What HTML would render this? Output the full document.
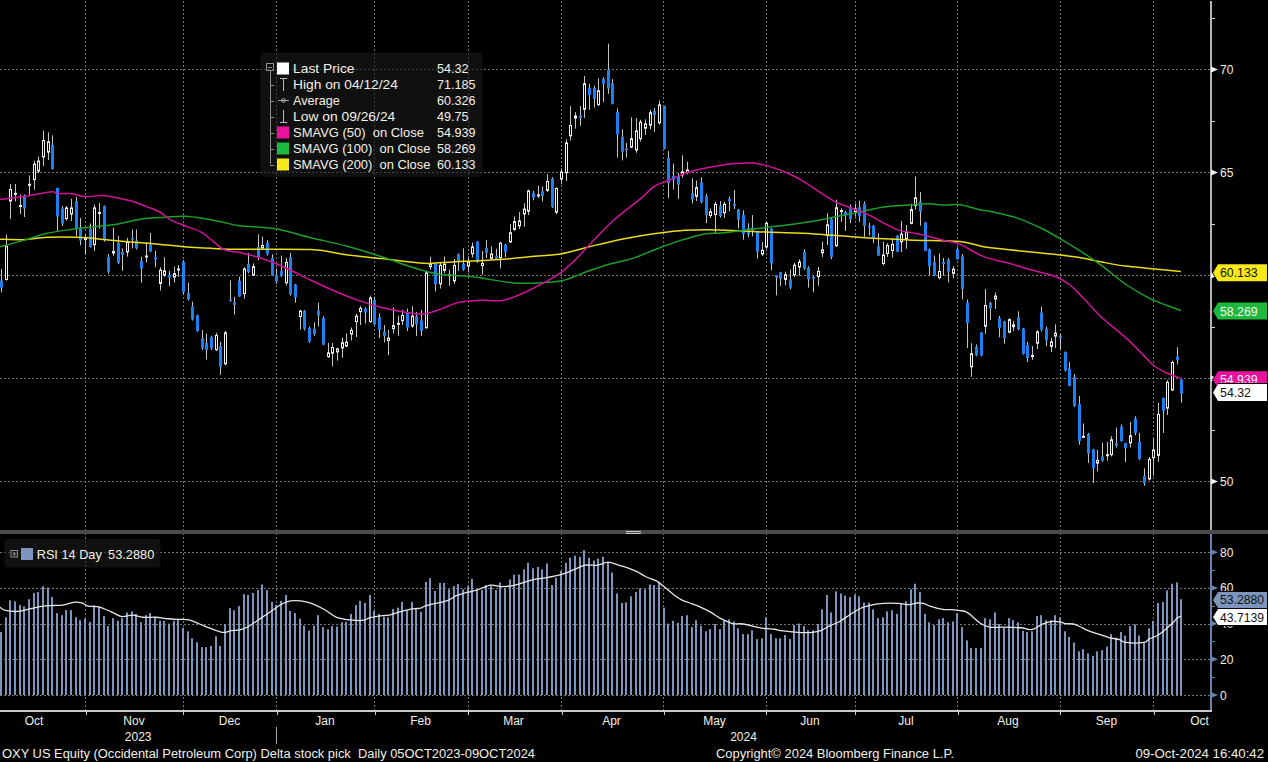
<!DOCTYPE html>
<html><head><meta charset="utf-8"><style>
html,body{margin:0;padding:0;background:#000;}
body{width:1268px;height:762px;overflow:hidden;}
svg{display:block;font-family:"Liberation Sans",sans-serif;}
</style></head><body>
<svg width="1268" height="762" viewBox="0 0 1268 762">
<rect width="1268" height="762" fill="#000"/>
<line x1="85.5" y1="1" x2="85.5" y2="711" stroke="#747474" stroke-width="1" stroke-dasharray="2 2"/>
<line x1="183.5" y1="1" x2="183.5" y2="711" stroke="#747474" stroke-width="1" stroke-dasharray="2 2"/>
<line x1="276.5" y1="1" x2="276.5" y2="711" stroke="#747474" stroke-width="1" stroke-dasharray="2 2"/>
<line x1="374.5" y1="1" x2="374.5" y2="711" stroke="#747474" stroke-width="1" stroke-dasharray="2 2"/>
<line x1="468.5" y1="1" x2="468.5" y2="711" stroke="#747474" stroke-width="1" stroke-dasharray="2 2"/>
<line x1="561.5" y1="1" x2="561.5" y2="711" stroke="#747474" stroke-width="1" stroke-dasharray="2 2"/>
<line x1="663.5" y1="1" x2="663.5" y2="711" stroke="#747474" stroke-width="1" stroke-dasharray="2 2"/>
<line x1="766.5" y1="1" x2="766.5" y2="711" stroke="#747474" stroke-width="1" stroke-dasharray="2 2"/>
<line x1="855.5" y1="1" x2="855.5" y2="711" stroke="#747474" stroke-width="1" stroke-dasharray="2 2"/>
<line x1="957.5" y1="1" x2="957.5" y2="711" stroke="#747474" stroke-width="1" stroke-dasharray="2 2"/>
<line x1="1060.5" y1="1" x2="1060.5" y2="711" stroke="#747474" stroke-width="1" stroke-dasharray="2 2"/>
<line x1="1153.5" y1="1" x2="1153.5" y2="711" stroke="#747474" stroke-width="1" stroke-dasharray="2 2"/>
<line x1="0" y1="69.5" x2="1211" y2="69.5" stroke="#747474" stroke-width="1" stroke-dasharray="2 2"/>
<line x1="0" y1="172.5" x2="1211" y2="172.5" stroke="#747474" stroke-width="1" stroke-dasharray="2 2"/>
<line x1="0" y1="275.5" x2="1211" y2="275.5" stroke="#747474" stroke-width="1" stroke-dasharray="2 2"/>
<line x1="0" y1="378.5" x2="1211" y2="378.5" stroke="#747474" stroke-width="1" stroke-dasharray="2 2"/>
<line x1="0" y1="481.5" x2="1211" y2="481.5" stroke="#747474" stroke-width="1" stroke-dasharray="2 2"/>
<line x1="0" y1="552.5" x2="1211" y2="552.5" stroke="#747474" stroke-width="1" stroke-dasharray="2 2"/>
<line x1="0" y1="588.5" x2="1211" y2="588.5" stroke="#747474" stroke-width="1" stroke-dasharray="2 2"/>
<line x1="0" y1="624.5" x2="1211" y2="624.5" stroke="#747474" stroke-width="1" stroke-dasharray="2 2"/>
<line x1="0" y1="659.5" x2="1211" y2="659.5" stroke="#747474" stroke-width="1" stroke-dasharray="2 2"/>
<line x1="0" y1="695.5" x2="1211" y2="695.5" stroke="#747474" stroke-width="1" stroke-dasharray="2 2"/>
<rect x="260.5" y="52.5" width="222" height="124.5" rx="4" fill="#1a1a1a" fill-opacity="0.6"/>
<rect x="1" y="269" width="1" height="23.5" fill="#c4c4c4"/>
<rect x="0" y="280.6" width="3" height="7.1" fill="#1d80f2"/>
<rect x="6" y="234.6" width="1" height="46" fill="#c4c4c4"/>
<rect x="5.5" y="246.5" width="2" height="33" fill="#000" stroke="#f0f0f0" stroke-width="1"/>
<rect x="10" y="183.8" width="1" height="35.2" fill="#c4c4c4"/>
<rect x="9.5" y="189.5" width="2" height="11.5" fill="#000" stroke="#f0f0f0" stroke-width="1"/>
<rect x="15" y="184" width="1" height="17.5" fill="#c4c4c4"/>
<rect x="14.5" y="193.3" width="2" height="1" fill="#000" stroke="#f0f0f0" stroke-width="1"/>
<rect x="20" y="194.4" width="1" height="19.6" fill="#c4c4c4"/>
<rect x="19.5" y="205.5" width="2" height="1" fill="#000" stroke="#f0f0f0" stroke-width="1"/>
<rect x="24" y="194.4" width="1" height="22.6" fill="#c4c4c4"/>
<rect x="23" y="195.6" width="3" height="13" fill="#1d80f2"/>
<rect x="29" y="175.5" width="1" height="20.1" fill="#c4c4c4"/>
<rect x="28.5" y="184.3" width="2" height="1" fill="#000" stroke="#f0f0f0" stroke-width="1"/>
<rect x="34" y="160.6" width="1" height="29.1" fill="#c4c4c4"/>
<rect x="33.5" y="164.2" width="2" height="15.3" fill="#000" stroke="#f0f0f0" stroke-width="1"/>
<rect x="38" y="156.6" width="1" height="16.4" fill="#c4c4c4"/>
<rect x="37.5" y="161.1" width="2" height="9.9" fill="#000" stroke="#f0f0f0" stroke-width="1"/>
<rect x="43" y="130.6" width="1" height="35.4" fill="#c4c4c4"/>
<rect x="42.5" y="140.5" width="2" height="16.3" fill="#000" stroke="#f0f0f0" stroke-width="1"/>
<rect x="48" y="132.3" width="1" height="27.7" fill="#c4c4c4"/>
<rect x="47.5" y="141.8" width="2" height="10.3" fill="#000" stroke="#f0f0f0" stroke-width="1"/>
<rect x="52" y="135.4" width="1" height="34.2" fill="#c4c4c4"/>
<rect x="51" y="144.8" width="3" height="24.2" fill="#1d80f2"/>
<rect x="57" y="187.8" width="1" height="43.2" fill="#c4c4c4"/>
<rect x="56" y="187.8" width="3" height="28.6" fill="#1d80f2"/>
<rect x="62" y="206" width="1" height="20" fill="#c4c4c4"/>
<rect x="61" y="208.6" width="3" height="14.9" fill="#1d80f2"/>
<rect x="66" y="206" width="1" height="14.4" fill="#c4c4c4"/>
<rect x="65.5" y="207.9" width="2" height="10.8" fill="#000" stroke="#f0f0f0" stroke-width="1"/>
<rect x="71" y="198.7" width="1" height="22.3" fill="#c4c4c4"/>
<rect x="70.5" y="207.9" width="2" height="6.1" fill="#000" stroke="#f0f0f0" stroke-width="1"/>
<rect x="76" y="196.8" width="1" height="39" fill="#c4c4c4"/>
<rect x="75" y="201.5" width="3" height="27.2" fill="#1d80f2"/>
<rect x="80" y="218" width="1" height="27.2" fill="#c4c4c4"/>
<rect x="79" y="228.7" width="3" height="11.8" fill="#1d80f2"/>
<rect x="85" y="234.6" width="1" height="20.1" fill="#c4c4c4"/>
<rect x="84.5" y="238.1" width="2" height="1.4" fill="#000" stroke="#f0f0f0" stroke-width="1"/>
<rect x="90" y="223.5" width="1" height="24.1" fill="#c4c4c4"/>
<rect x="89" y="229" width="3" height="18" fill="#1d80f2"/>
<rect x="94" y="204.6" width="1" height="46.4" fill="#c4c4c4"/>
<rect x="93.5" y="207.9" width="2" height="36.8" fill="#000" stroke="#f0f0f0" stroke-width="1"/>
<rect x="99" y="203" width="1" height="25.7" fill="#c4c4c4"/>
<rect x="98.5" y="212.5" width="2" height="1" fill="#000" stroke="#f0f0f0" stroke-width="1"/>
<rect x="104" y="205.5" width="1" height="36.2" fill="#c4c4c4"/>
<rect x="103" y="206" width="3" height="33" fill="#1d80f2"/>
<rect x="108" y="254" width="1" height="19.6" fill="#c4c4c4"/>
<rect x="107" y="257" width="3" height="14.7" fill="#1d80f2"/>
<rect x="113" y="227.5" width="1" height="28.3" fill="#c4c4c4"/>
<rect x="112.5" y="251.5" width="2" height="1.5" fill="#000" stroke="#f0f0f0" stroke-width="1"/>
<rect x="118" y="235.8" width="1" height="28.2" fill="#c4c4c4"/>
<rect x="117" y="242.8" width="3" height="20.2" fill="#1d80f2"/>
<rect x="122" y="248.4" width="1" height="22.5" fill="#c4c4c4"/>
<rect x="121" y="252" width="3" height="2.8" fill="#1d80f2"/>
<rect x="127" y="237.8" width="1" height="18.9" fill="#c4c4c4"/>
<rect x="126.5" y="241.8" width="2" height="10.1" fill="#000" stroke="#f0f0f0" stroke-width="1"/>
<rect x="132" y="229.5" width="1" height="18.9" fill="#c4c4c4"/>
<rect x="131" y="237.8" width="3" height="1.9" fill="#1d80f2"/>
<rect x="136" y="229.5" width="1" height="20.1" fill="#c4c4c4"/>
<rect x="135" y="240.6" width="3" height="7.8" fill="#1d80f2"/>
<rect x="141" y="256.7" width="1" height="26" fill="#c4c4c4"/>
<rect x="140" y="261" width="3" height="7.5" fill="#1d80f2"/>
<rect x="146" y="242.5" width="1" height="20.1" fill="#c4c4c4"/>
<rect x="145.5" y="256" width="2" height="1" fill="#000" stroke="#f0f0f0" stroke-width="1"/>
<rect x="150" y="233" width="1" height="19" fill="#c4c4c4"/>
<rect x="149" y="244.9" width="3" height="6.6" fill="#1d80f2"/>
<rect x="155" y="250.8" width="1" height="16.5" fill="#c4c4c4"/>
<rect x="154" y="257.2" width="3" height="2.3" fill="#1d80f2"/>
<rect x="160" y="267.3" width="1" height="23.2" fill="#c4c4c4"/>
<rect x="159.5" y="270.2" width="2" height="13.2" fill="#000" stroke="#f0f0f0" stroke-width="1"/>
<rect x="164" y="257.2" width="1" height="19.6" fill="#c4c4c4"/>
<rect x="163.5" y="270.9" width="2" height="4.2" fill="#000" stroke="#f0f0f0" stroke-width="1"/>
<rect x="169" y="270.9" width="1" height="15.3" fill="#c4c4c4"/>
<rect x="168" y="275" width="3" height="2.5" fill="#1d80f2"/>
<rect x="174" y="266.6" width="1" height="16.1" fill="#c4c4c4"/>
<rect x="173.5" y="273.7" width="2" height="3.3" fill="#000" stroke="#f0f0f0" stroke-width="1"/>
<rect x="178" y="265" width="1" height="11.8" fill="#c4c4c4"/>
<rect x="177.5" y="269" width="2" height="1" fill="#000" stroke="#f0f0f0" stroke-width="1"/>
<rect x="183" y="260.2" width="1" height="34.3" fill="#c4c4c4"/>
<rect x="182" y="261.9" width="3" height="30.2" fill="#1d80f2"/>
<rect x="188" y="282.7" width="1" height="17.7" fill="#c4c4c4"/>
<rect x="187" y="292.8" width="3" height="6.4" fill="#1d80f2"/>
<rect x="192" y="301.6" width="1" height="18.9" fill="#c4c4c4"/>
<rect x="191" y="306.3" width="3" height="13" fill="#1d80f2"/>
<rect x="197" y="314.6" width="1" height="17.2" fill="#c4c4c4"/>
<rect x="196" y="315.3" width="3" height="15.8" fill="#1d80f2"/>
<rect x="202" y="330" width="1" height="20" fill="#c4c4c4"/>
<rect x="201" y="338.2" width="3" height="10.2" fill="#1d80f2"/>
<rect x="206" y="333.5" width="1" height="26" fill="#c4c4c4"/>
<rect x="205" y="343" width="3" height="7" fill="#1d80f2"/>
<rect x="211" y="335.8" width="1" height="14.2" fill="#c4c4c4"/>
<rect x="210" y="337" width="3" height="11.4" fill="#1d80f2"/>
<rect x="216" y="332.8" width="1" height="18.4" fill="#c4c4c4"/>
<rect x="215.5" y="335.5" width="2" height="14" fill="#000" stroke="#f0f0f0" stroke-width="1"/>
<rect x="220" y="341.7" width="1" height="33.1" fill="#c4c4c4"/>
<rect x="219" y="346" width="3" height="20.5" fill="#1d80f2"/>
<rect x="225" y="331" width="1" height="34.4" fill="#c4c4c4"/>
<rect x="224.5" y="332.8" width="2" height="30.9" fill="#000" stroke="#f0f0f0" stroke-width="1"/>
<rect x="230" y="280.3" width="1" height="21.3" fill="#c4c4c4"/>
<rect x="229" y="299.7" width="3" height="1.5" fill="#1d80f2"/>
<rect x="234" y="296.9" width="1" height="17.7" fill="#c4c4c4"/>
<rect x="233" y="302.3" width="3" height="2.7" fill="#1d80f2"/>
<rect x="239" y="276.8" width="1" height="20.1" fill="#c4c4c4"/>
<rect x="238" y="280.8" width="3" height="15.6" fill="#1d80f2"/>
<rect x="244" y="267.3" width="1" height="31.4" fill="#c4c4c4"/>
<rect x="243.5" y="269" width="2" height="24.5" fill="#000" stroke="#f0f0f0" stroke-width="1"/>
<rect x="248" y="253" width="1" height="20.2" fill="#c4c4c4"/>
<rect x="247" y="263.8" width="3" height="8.2" fill="#1d80f2"/>
<rect x="253" y="263.3" width="1" height="12.7" fill="#c4c4c4"/>
<rect x="252.5" y="266.6" width="2" height="8.5" fill="#000" stroke="#f0f0f0" stroke-width="1"/>
<rect x="258" y="234.3" width="1" height="25.9" fill="#c4c4c4"/>
<rect x="257" y="247.2" width="3" height="10.7" fill="#1d80f2"/>
<rect x="262" y="236.6" width="1" height="13" fill="#c4c4c4"/>
<rect x="261.5" y="245.4" width="2" height="2.5" fill="#000" stroke="#f0f0f0" stroke-width="1"/>
<rect x="267" y="240.2" width="1" height="15.3" fill="#c4c4c4"/>
<rect x="266" y="243" width="3" height="10.9" fill="#1d80f2"/>
<rect x="272" y="254.3" width="1" height="21.7" fill="#c4c4c4"/>
<rect x="271" y="257.9" width="3" height="17.7" fill="#1d80f2"/>
<rect x="276" y="268.5" width="1" height="15.4" fill="#c4c4c4"/>
<rect x="275" y="275.1" width="3" height="6.4" fill="#1d80f2"/>
<rect x="281" y="255.5" width="1" height="21.3" fill="#c4c4c4"/>
<rect x="280" y="270.9" width="3" height="4.2" fill="#1d80f2"/>
<rect x="286" y="257.9" width="1" height="27.6" fill="#c4c4c4"/>
<rect x="285.5" y="262.4" width="2" height="20.3" fill="#000" stroke="#f0f0f0" stroke-width="1"/>
<rect x="290" y="253" width="1" height="42.7" fill="#c4c4c4"/>
<rect x="289" y="257.2" width="3" height="36.8" fill="#1d80f2"/>
<rect x="295" y="283.9" width="1" height="18.9" fill="#c4c4c4"/>
<rect x="294" y="284.6" width="3" height="12.7" fill="#1d80f2"/>
<rect x="300" y="309.9" width="1" height="19.6" fill="#c4c4c4"/>
<rect x="299.5" y="311.1" width="2" height="5.4" fill="#000" stroke="#f0f0f0" stroke-width="1"/>
<rect x="304" y="309.9" width="1" height="20.5" fill="#c4c4c4"/>
<rect x="303" y="310.6" width="3" height="18.1" fill="#1d80f2"/>
<rect x="309" y="326.4" width="1" height="16.6" fill="#c4c4c4"/>
<rect x="308" y="328" width="3" height="13.3" fill="#1d80f2"/>
<rect x="314" y="322.4" width="1" height="13.4" fill="#c4c4c4"/>
<rect x="313" y="328.7" width="3" height="5.5" fill="#1d80f2"/>
<rect x="318" y="302.8" width="1" height="23.6" fill="#c4c4c4"/>
<rect x="317" y="310.6" width="3" height="4.7" fill="#1d80f2"/>
<rect x="323" y="316.2" width="1" height="29.1" fill="#c4c4c4"/>
<rect x="322" y="318.1" width="3" height="26.5" fill="#1d80f2"/>
<rect x="328" y="343" width="1" height="14.8" fill="#c4c4c4"/>
<rect x="327.5" y="352.9" width="2" height="3.7" fill="#000" stroke="#f0f0f0" stroke-width="1"/>
<rect x="332" y="343" width="1" height="23.5" fill="#c4c4c4"/>
<rect x="331.5" y="347.5" width="2" height="5.6" fill="#000" stroke="#f0f0f0" stroke-width="1"/>
<rect x="337" y="347.7" width="1" height="12.9" fill="#c4c4c4"/>
<rect x="336.5" y="348.9" width="2" height="3" fill="#000" stroke="#f0f0f0" stroke-width="1"/>
<rect x="342" y="337.5" width="1" height="20.3" fill="#c4c4c4"/>
<rect x="341.5" y="342.7" width="2" height="5.2" fill="#000" stroke="#f0f0f0" stroke-width="1"/>
<rect x="346" y="333.5" width="1" height="13.5" fill="#c4c4c4"/>
<rect x="345.5" y="342.2" width="2" height="3.8" fill="#000" stroke="#f0f0f0" stroke-width="1"/>
<rect x="351" y="327.5" width="1" height="13" fill="#c4c4c4"/>
<rect x="350.5" y="330.4" width="2" height="3.7" fill="#000" stroke="#f0f0f0" stroke-width="1"/>
<rect x="356" y="314" width="1" height="23" fill="#c4c4c4"/>
<rect x="355.5" y="316.2" width="2" height="5.3" fill="#000" stroke="#f0f0f0" stroke-width="1"/>
<rect x="360" y="306.2" width="1" height="18.8" fill="#c4c4c4"/>
<rect x="359.5" y="308.4" width="2" height="3.2" fill="#000" stroke="#f0f0f0" stroke-width="1"/>
<rect x="365" y="307.4" width="1" height="16.1" fill="#c4c4c4"/>
<rect x="364" y="308.6" width="3" height="4" fill="#1d80f2"/>
<rect x="370" y="295.6" width="1" height="27.2" fill="#c4c4c4"/>
<rect x="369.5" y="298" width="2" height="23.5" fill="#000" stroke="#f0f0f0" stroke-width="1"/>
<rect x="374" y="296.8" width="1" height="28.3" fill="#c4c4c4"/>
<rect x="373" y="299.8" width="3" height="24.6" fill="#1d80f2"/>
<rect x="379" y="313.3" width="1" height="24.8" fill="#c4c4c4"/>
<rect x="378" y="317.3" width="3" height="12.6" fill="#1d80f2"/>
<rect x="384" y="325.1" width="1" height="17.3" fill="#c4c4c4"/>
<rect x="383" y="331.5" width="3" height="4.7" fill="#1d80f2"/>
<rect x="388" y="329.9" width="1" height="25.2" fill="#c4c4c4"/>
<rect x="387.5" y="338.1" width="2" height="2.4" fill="#000" stroke="#f0f0f0" stroke-width="1"/>
<rect x="393" y="307.4" width="1" height="26" fill="#c4c4c4"/>
<rect x="392.5" y="325.6" width="2" height="3" fill="#000" stroke="#f0f0f0" stroke-width="1"/>
<rect x="398" y="315.7" width="1" height="20.1" fill="#c4c4c4"/>
<rect x="397.5" y="323.3" width="2" height="1" fill="#000" stroke="#f0f0f0" stroke-width="1"/>
<rect x="402" y="309.8" width="1" height="15.3" fill="#c4c4c4"/>
<rect x="401.5" y="315.5" width="2" height="5.1" fill="#000" stroke="#f0f0f0" stroke-width="1"/>
<rect x="407" y="308.6" width="1" height="22.4" fill="#c4c4c4"/>
<rect x="406" y="312.1" width="3" height="15.4" fill="#1d80f2"/>
<rect x="412" y="306.2" width="1" height="21.3" fill="#c4c4c4"/>
<rect x="411.5" y="316.2" width="2" height="9.6" fill="#000" stroke="#f0f0f0" stroke-width="1"/>
<rect x="416" y="312.1" width="1" height="24.1" fill="#c4c4c4"/>
<rect x="415" y="316.4" width="3" height="8" fill="#1d80f2"/>
<rect x="421" y="309.8" width="1" height="26" fill="#c4c4c4"/>
<rect x="420" y="320.4" width="3" height="10.6" fill="#1d80f2"/>
<rect x="426" y="270.8" width="1" height="57.9" fill="#c4c4c4"/>
<rect x="425.5" y="272.9" width="2" height="54.8" fill="#000" stroke="#f0f0f0" stroke-width="1"/>
<rect x="430" y="256.6" width="1" height="13" fill="#c4c4c4"/>
<rect x="429.5" y="264.2" width="2" height="2.5" fill="#000" stroke="#f0f0f0" stroke-width="1"/>
<rect x="435" y="263" width="1" height="28.3" fill="#c4c4c4"/>
<rect x="434" y="263.7" width="3" height="20.6" fill="#1d80f2"/>
<rect x="440" y="262.5" width="1" height="26" fill="#c4c4c4"/>
<rect x="439.5" y="265.4" width="2" height="18.4" fill="#000" stroke="#f0f0f0" stroke-width="1"/>
<rect x="444" y="256.6" width="1" height="16.6" fill="#c4c4c4"/>
<rect x="443.5" y="264.2" width="2" height="6.1" fill="#000" stroke="#f0f0f0" stroke-width="1"/>
<rect x="449" y="269.6" width="1" height="16.1" fill="#c4c4c4"/>
<rect x="448.5" y="274.8" width="2" height="1" fill="#000" stroke="#f0f0f0" stroke-width="1"/>
<rect x="454" y="259" width="1" height="24.8" fill="#c4c4c4"/>
<rect x="453.5" y="265.4" width="2" height="15.5" fill="#000" stroke="#f0f0f0" stroke-width="1"/>
<rect x="458" y="253.5" width="1" height="17.3" fill="#c4c4c4"/>
<rect x="457" y="254.3" width="3" height="7.7" fill="#1d80f2"/>
<rect x="463" y="248.3" width="1" height="22.5" fill="#c4c4c4"/>
<rect x="462" y="263.7" width="3" height="5.9" fill="#1d80f2"/>
<rect x="468" y="256.5" width="1" height="15.9" fill="#c4c4c4"/>
<rect x="467.5" y="262.2" width="2" height="3.8" fill="#000" stroke="#f0f0f0" stroke-width="1"/>
<rect x="472" y="242.4" width="1" height="15.1" fill="#c4c4c4"/>
<rect x="471.5" y="246.9" width="2" height="6.8" fill="#000" stroke="#f0f0f0" stroke-width="1"/>
<rect x="477" y="241" width="1" height="21.9" fill="#c4c4c4"/>
<rect x="476" y="241.7" width="3" height="19.6" fill="#1d80f2"/>
<rect x="482" y="251.1" width="1" height="23.6" fill="#c4c4c4"/>
<rect x="481.5" y="263.4" width="2" height="2.1" fill="#000" stroke="#f0f0f0" stroke-width="1"/>
<rect x="486" y="240" width="1" height="18.2" fill="#c4c4c4"/>
<rect x="485" y="248" width="3" height="4.8" fill="#1d80f2"/>
<rect x="491" y="246.4" width="1" height="13" fill="#c4c4c4"/>
<rect x="490.5" y="254" width="2" height="4.4" fill="#000" stroke="#f0f0f0" stroke-width="1"/>
<rect x="496" y="248.8" width="1" height="11.1" fill="#c4c4c4"/>
<rect x="495" y="255.8" width="3" height="3.1" fill="#1d80f2"/>
<rect x="500" y="241.7" width="1" height="26.7" fill="#c4c4c4"/>
<rect x="499.5" y="243.3" width="2" height="14.4" fill="#000" stroke="#f0f0f0" stroke-width="1"/>
<rect x="505" y="244" width="1" height="13" fill="#c4c4c4"/>
<rect x="504" y="244.7" width="3" height="7.1" fill="#1d80f2"/>
<rect x="510" y="224" width="1" height="18.8" fill="#c4c4c4"/>
<rect x="509.5" y="232.7" width="2" height="9.2" fill="#000" stroke="#f0f0f0" stroke-width="1"/>
<rect x="514" y="216.4" width="1" height="14.6" fill="#c4c4c4"/>
<rect x="513.5" y="221.6" width="2" height="7.8" fill="#000" stroke="#f0f0f0" stroke-width="1"/>
<rect x="519" y="212.1" width="1" height="17" fill="#c4c4c4"/>
<rect x="518.5" y="220.9" width="2" height="4.9" fill="#000" stroke="#f0f0f0" stroke-width="1"/>
<rect x="524" y="203.2" width="1" height="23.6" fill="#c4c4c4"/>
<rect x="523.5" y="209.1" width="2" height="4.9" fill="#000" stroke="#f0f0f0" stroke-width="1"/>
<rect x="528" y="189.7" width="1" height="25.3" fill="#c4c4c4"/>
<rect x="527.5" y="190.9" width="2" height="20.3" fill="#000" stroke="#f0f0f0" stroke-width="1"/>
<rect x="533" y="190.9" width="1" height="9.4" fill="#c4c4c4"/>
<rect x="532" y="193.2" width="3" height="4.3" fill="#1d80f2"/>
<rect x="538" y="185.7" width="1" height="12.3" fill="#c4c4c4"/>
<rect x="537.5" y="194.9" width="2" height="1" fill="#000" stroke="#f0f0f0" stroke-width="1"/>
<rect x="542" y="186.6" width="1" height="14.9" fill="#c4c4c4"/>
<rect x="541" y="191.3" width="3" height="4.7" fill="#1d80f2"/>
<rect x="547" y="173.9" width="1" height="18.1" fill="#c4c4c4"/>
<rect x="546.5" y="181.5" width="2" height="8.9" fill="#000" stroke="#f0f0f0" stroke-width="1"/>
<rect x="552" y="177.2" width="1" height="30.7" fill="#c4c4c4"/>
<rect x="551" y="178.6" width="3" height="28.3" fill="#1d80f2"/>
<rect x="556" y="187.3" width="1" height="26.7" fill="#c4c4c4"/>
<rect x="555.5" y="188.5" width="2" height="23.6" fill="#000" stroke="#f0f0f0" stroke-width="1"/>
<rect x="561" y="168.4" width="1" height="15.9" fill="#c4c4c4"/>
<rect x="560.5" y="172" width="2" height="7" fill="#000" stroke="#f0f0f0" stroke-width="1"/>
<rect x="566" y="139.4" width="1" height="41.6" fill="#c4c4c4"/>
<rect x="565.5" y="142.9" width="2" height="29.8" fill="#000" stroke="#f0f0f0" stroke-width="1"/>
<rect x="570" y="106" width="1" height="34.6" fill="#c4c4c4"/>
<rect x="569.5" y="125.5" width="2" height="10.3" fill="#000" stroke="#f0f0f0" stroke-width="1"/>
<rect x="575" y="112.2" width="1" height="16.5" fill="#c4c4c4"/>
<rect x="574.5" y="116" width="2" height="2.1" fill="#000" stroke="#f0f0f0" stroke-width="1"/>
<rect x="580" y="106" width="1" height="19.7" fill="#c4c4c4"/>
<rect x="579" y="115.5" width="3" height="2.4" fill="#1d80f2"/>
<rect x="584" y="76" width="1" height="41.9" fill="#c4c4c4"/>
<rect x="583.5" y="83.7" width="2" height="25.6" fill="#000" stroke="#f0f0f0" stroke-width="1"/>
<rect x="589" y="83.9" width="1" height="25.9" fill="#c4c4c4"/>
<rect x="588" y="87.9" width="3" height="7.1" fill="#1d80f2"/>
<rect x="594" y="85.5" width="1" height="22" fill="#c4c4c4"/>
<rect x="593" y="87.9" width="3" height="11.1" fill="#1d80f2"/>
<rect x="598" y="78.4" width="1" height="27.6" fill="#c4c4c4"/>
<rect x="597.5" y="90.7" width="2" height="13.9" fill="#000" stroke="#f0f0f0" stroke-width="1"/>
<rect x="603" y="77.2" width="1" height="24.8" fill="#c4c4c4"/>
<rect x="602" y="79.1" width="3" height="4.8" fill="#1d80f2"/>
<rect x="608" y="43.7" width="1" height="50.1" fill="#c4c4c4"/>
<rect x="607" y="69.7" width="3" height="18.9" fill="#1d80f2"/>
<rect x="612" y="79.1" width="1" height="25.3" fill="#c4c4c4"/>
<rect x="611" y="83.2" width="3" height="20.5" fill="#1d80f2"/>
<rect x="617" y="108.4" width="1" height="49.2" fill="#c4c4c4"/>
<rect x="616" y="112.2" width="3" height="22.2" fill="#1d80f2"/>
<rect x="622" y="129.2" width="1" height="31.2" fill="#c4c4c4"/>
<rect x="621" y="136.8" width="3" height="14.9" fill="#1d80f2"/>
<rect x="626" y="142.9" width="1" height="14.7" fill="#c4c4c4"/>
<rect x="625" y="148.6" width="3" height="1.9" fill="#1d80f2"/>
<rect x="631" y="117.4" width="1" height="30.7" fill="#c4c4c4"/>
<rect x="630.5" y="138.7" width="2" height="8.4" fill="#000" stroke="#f0f0f0" stroke-width="1"/>
<rect x="636" y="117.9" width="1" height="34.9" fill="#c4c4c4"/>
<rect x="635.5" y="130.9" width="2" height="19.1" fill="#000" stroke="#f0f0f0" stroke-width="1"/>
<rect x="640" y="119.8" width="1" height="21.7" fill="#c4c4c4"/>
<rect x="639.5" y="122.2" width="2" height="16.4" fill="#000" stroke="#f0f0f0" stroke-width="1"/>
<rect x="645" y="119.3" width="1" height="15.8" fill="#c4c4c4"/>
<rect x="644.5" y="123.8" width="2" height="4.4" fill="#000" stroke="#f0f0f0" stroke-width="1"/>
<rect x="650" y="109.8" width="1" height="19.4" fill="#c4c4c4"/>
<rect x="649.5" y="112.7" width="2" height="12.5" fill="#000" stroke="#f0f0f0" stroke-width="1"/>
<rect x="654" y="108" width="1" height="24" fill="#c4c4c4"/>
<rect x="653" y="110.8" width="3" height="4.2" fill="#1d80f2"/>
<rect x="659" y="100.4" width="1" height="24.1" fill="#c4c4c4"/>
<rect x="658.5" y="104.9" width="2" height="17.9" fill="#000" stroke="#f0f0f0" stroke-width="1"/>
<rect x="664" y="105.6" width="1" height="43.7" fill="#c4c4c4"/>
<rect x="663" y="106" width="3" height="42.6" fill="#1d80f2"/>
<rect x="668" y="151" width="1" height="47.2" fill="#c4c4c4"/>
<rect x="667" y="158" width="3" height="25" fill="#1d80f2"/>
<rect x="673" y="163.5" width="1" height="26" fill="#c4c4c4"/>
<rect x="672" y="176" width="3" height="4" fill="#1d80f2"/>
<rect x="678" y="173" width="1" height="25.9" fill="#c4c4c4"/>
<rect x="677" y="176" width="3" height="8.7" fill="#1d80f2"/>
<rect x="682" y="155.2" width="1" height="22.4" fill="#c4c4c4"/>
<rect x="681.5" y="171.8" width="2" height="3" fill="#000" stroke="#f0f0f0" stroke-width="1"/>
<rect x="687" y="161.7" width="1" height="12.6" fill="#c4c4c4"/>
<rect x="686.5" y="170" width="2" height="2.5" fill="#000" stroke="#f0f0f0" stroke-width="1"/>
<rect x="692" y="178.3" width="1" height="25" fill="#c4c4c4"/>
<rect x="691" y="193.2" width="3" height="6.3" fill="#1d80f2"/>
<rect x="696" y="180.6" width="1" height="20.4" fill="#c4c4c4"/>
<rect x="695.5" y="187.7" width="2" height="8.5" fill="#000" stroke="#f0f0f0" stroke-width="1"/>
<rect x="701" y="177.3" width="1" height="26" fill="#c4c4c4"/>
<rect x="700" y="182.5" width="3" height="19.4" fill="#1d80f2"/>
<rect x="706" y="193.9" width="1" height="29.3" fill="#c4c4c4"/>
<rect x="705" y="196.2" width="3" height="18.9" fill="#1d80f2"/>
<rect x="710" y="208.5" width="1" height="9.5" fill="#c4c4c4"/>
<rect x="709.5" y="211.8" width="2" height="3.7" fill="#000" stroke="#f0f0f0" stroke-width="1"/>
<rect x="715" y="201.9" width="1" height="31.4" fill="#c4c4c4"/>
<rect x="714.5" y="204.3" width="2" height="10.3" fill="#000" stroke="#f0f0f0" stroke-width="1"/>
<rect x="720" y="201" width="1" height="16.5" fill="#c4c4c4"/>
<rect x="719" y="205.7" width="3" height="10.3" fill="#1d80f2"/>
<rect x="724" y="201.9" width="1" height="16.1" fill="#c4c4c4"/>
<rect x="723.5" y="204.3" width="2" height="8.4" fill="#000" stroke="#f0f0f0" stroke-width="1"/>
<rect x="729" y="196.7" width="1" height="14.6" fill="#c4c4c4"/>
<rect x="728" y="199" width="3" height="2.4" fill="#1d80f2"/>
<rect x="734" y="190" width="1" height="19" fill="#c4c4c4"/>
<rect x="733" y="203.8" width="3" height="2.3" fill="#1d80f2"/>
<rect x="738" y="209" width="1" height="19.6" fill="#c4c4c4"/>
<rect x="737" y="209.7" width="3" height="10.1" fill="#1d80f2"/>
<rect x="743" y="210.4" width="1" height="29.3" fill="#c4c4c4"/>
<rect x="742" y="215.1" width="3" height="18.9" fill="#1d80f2"/>
<rect x="748" y="223.2" width="1" height="14.1" fill="#c4c4c4"/>
<rect x="747" y="227.9" width="3" height="6.6" fill="#1d80f2"/>
<rect x="752" y="215.1" width="1" height="21.3" fill="#c4c4c4"/>
<rect x="751" y="227.4" width="3" height="2.8" fill="#1d80f2"/>
<rect x="757" y="231" width="1" height="27.6" fill="#c4c4c4"/>
<rect x="756" y="231.7" width="3" height="19.8" fill="#1d80f2"/>
<rect x="762" y="242" width="1" height="13.8" fill="#c4c4c4"/>
<rect x="761.5" y="250.4" width="2" height="3.7" fill="#000" stroke="#f0f0f0" stroke-width="1"/>
<rect x="766" y="221.5" width="1" height="27.2" fill="#c4c4c4"/>
<rect x="765.5" y="223.2" width="2" height="23.8" fill="#000" stroke="#f0f0f0" stroke-width="1"/>
<rect x="771" y="227.9" width="1" height="42.5" fill="#c4c4c4"/>
<rect x="770" y="228.6" width="3" height="34.7" fill="#1d80f2"/>
<rect x="776" y="275.1" width="1" height="20.3" fill="#c4c4c4"/>
<rect x="775" y="275.1" width="3" height="2.4" fill="#1d80f2"/>
<rect x="780" y="271.8" width="1" height="14.2" fill="#c4c4c4"/>
<rect x="779" y="272.3" width="3" height="6.6" fill="#1d80f2"/>
<rect x="785" y="271.8" width="1" height="13.5" fill="#c4c4c4"/>
<rect x="784.5" y="274.7" width="2" height="4.7" fill="#000" stroke="#f0f0f0" stroke-width="1"/>
<rect x="790" y="269.5" width="1" height="19.8" fill="#c4c4c4"/>
<rect x="789" y="279.4" width="3" height="8.3" fill="#1d80f2"/>
<rect x="794" y="262.8" width="1" height="14.2" fill="#c4c4c4"/>
<rect x="793.5" y="265.2" width="2" height="9.4" fill="#000" stroke="#f0f0f0" stroke-width="1"/>
<rect x="799" y="259.2" width="1" height="16.6" fill="#c4c4c4"/>
<rect x="798.5" y="262.1" width="2" height="4.9" fill="#000" stroke="#f0f0f0" stroke-width="1"/>
<rect x="804" y="249.3" width="1" height="20.6" fill="#c4c4c4"/>
<rect x="803" y="252.1" width="3" height="16.6" fill="#1d80f2"/>
<rect x="808" y="266.3" width="1" height="21.3" fill="#c4c4c4"/>
<rect x="807" y="267.5" width="3" height="11.8" fill="#1d80f2"/>
<rect x="813" y="275.8" width="1" height="16.5" fill="#c4c4c4"/>
<rect x="812" y="277" width="3" height="1.5" fill="#1d80f2"/>
<rect x="818" y="266.8" width="1" height="18.9" fill="#c4c4c4"/>
<rect x="817.5" y="271.5" width="2" height="5" fill="#000" stroke="#f0f0f0" stroke-width="1"/>
<rect x="822" y="241.5" width="1" height="15.4" fill="#c4c4c4"/>
<rect x="821.5" y="249.8" width="2" height="3" fill="#000" stroke="#f0f0f0" stroke-width="1"/>
<rect x="827" y="213.2" width="1" height="31.8" fill="#c4c4c4"/>
<rect x="826.5" y="224.8" width="2" height="10.8" fill="#000" stroke="#f0f0f0" stroke-width="1"/>
<rect x="831" y="217.9" width="1" height="41.3" fill="#c4c4c4"/>
<rect x="830" y="219.1" width="3" height="37.8" fill="#1d80f2"/>
<rect x="836" y="199.7" width="1" height="47.2" fill="#c4c4c4"/>
<rect x="835.5" y="207.7" width="2" height="38" fill="#000" stroke="#f0f0f0" stroke-width="1"/>
<rect x="841" y="208.4" width="1" height="13.5" fill="#c4c4c4"/>
<rect x="840.5" y="210.6" width="2" height="1" fill="#000" stroke="#f0f0f0" stroke-width="1"/>
<rect x="845" y="210.8" width="1" height="20.1" fill="#c4c4c4"/>
<rect x="844" y="212" width="3" height="3.5" fill="#1d80f2"/>
<rect x="850" y="204.4" width="1" height="18.9" fill="#c4c4c4"/>
<rect x="849" y="206.8" width="3" height="12.3" fill="#1d80f2"/>
<rect x="855" y="203.7" width="1" height="13" fill="#c4c4c4"/>
<rect x="854.5" y="208.9" width="2" height="2.6" fill="#000" stroke="#f0f0f0" stroke-width="1"/>
<rect x="859" y="200.6" width="1" height="21.3" fill="#c4c4c4"/>
<rect x="858" y="207.2" width="3" height="9" fill="#1d80f2"/>
<rect x="864" y="201.3" width="1" height="35.5" fill="#c4c4c4"/>
<rect x="863" y="203.7" width="3" height="22.4" fill="#1d80f2"/>
<rect x="869" y="222.6" width="1" height="13" fill="#c4c4c4"/>
<rect x="868" y="226.1" width="3" height="1.5" fill="#1d80f2"/>
<rect x="873" y="225" width="1" height="18.2" fill="#c4c4c4"/>
<rect x="872" y="226.1" width="3" height="11.4" fill="#1d80f2"/>
<rect x="878" y="233.2" width="1" height="22.5" fill="#c4c4c4"/>
<rect x="877" y="246.2" width="3" height="9.5" fill="#1d80f2"/>
<rect x="883" y="241.5" width="1" height="23.6" fill="#c4c4c4"/>
<rect x="882.5" y="255" width="2" height="8.5" fill="#000" stroke="#f0f0f0" stroke-width="1"/>
<rect x="887" y="243.2" width="1" height="13.7" fill="#c4c4c4"/>
<rect x="886.5" y="245.5" width="2" height="8" fill="#000" stroke="#f0f0f0" stroke-width="1"/>
<rect x="892" y="238" width="1" height="19.3" fill="#c4c4c4"/>
<rect x="891.5" y="244.4" width="2" height="6.1" fill="#000" stroke="#f0f0f0" stroke-width="1"/>
<rect x="897" y="235.1" width="1" height="17" fill="#c4c4c4"/>
<rect x="896" y="235.6" width="3" height="16.1" fill="#1d80f2"/>
<rect x="901" y="221" width="1" height="31.1" fill="#c4c4c4"/>
<rect x="900.5" y="234.2" width="2" height="7.5" fill="#000" stroke="#f0f0f0" stroke-width="1"/>
<rect x="906" y="225" width="1" height="23.6" fill="#c4c4c4"/>
<rect x="905.5" y="232.5" width="2" height="6.1" fill="#000" stroke="#f0f0f0" stroke-width="1"/>
<rect x="911" y="203.7" width="1" height="20.6" fill="#c4c4c4"/>
<rect x="910.5" y="209.6" width="2" height="13.7" fill="#000" stroke="#f0f0f0" stroke-width="1"/>
<rect x="915" y="176.5" width="1" height="33.1" fill="#c4c4c4"/>
<rect x="914.5" y="197.8" width="2" height="7.8" fill="#000" stroke="#f0f0f0" stroke-width="1"/>
<rect x="920" y="191.9" width="1" height="33.8" fill="#c4c4c4"/>
<rect x="919" y="201.3" width="3" height="10.2" fill="#1d80f2"/>
<rect x="925" y="221.9" width="1" height="29.1" fill="#c4c4c4"/>
<rect x="924" y="222.6" width="3" height="28.4" fill="#1d80f2"/>
<rect x="929" y="248.6" width="1" height="26.7" fill="#c4c4c4"/>
<rect x="928" y="249.3" width="3" height="17" fill="#1d80f2"/>
<rect x="934" y="255.7" width="1" height="20.5" fill="#c4c4c4"/>
<rect x="933" y="262" width="3" height="13.3" fill="#1d80f2"/>
<rect x="939" y="253.3" width="1" height="26" fill="#c4c4c4"/>
<rect x="938.5" y="271.5" width="2" height="6.1" fill="#000" stroke="#f0f0f0" stroke-width="1"/>
<rect x="943" y="258" width="1" height="17.8" fill="#c4c4c4"/>
<rect x="942" y="262" width="3" height="2" fill="#1d80f2"/>
<rect x="948" y="258" width="1" height="24.4" fill="#c4c4c4"/>
<rect x="947" y="259.7" width="3" height="11.8" fill="#1d80f2"/>
<rect x="953" y="266.3" width="1" height="11.8" fill="#c4c4c4"/>
<rect x="952.5" y="269.2" width="2" height="4.2" fill="#000" stroke="#f0f0f0" stroke-width="1"/>
<rect x="957" y="247.4" width="1" height="12.3" fill="#c4c4c4"/>
<rect x="956" y="249.3" width="3" height="9.9" fill="#1d80f2"/>
<rect x="962" y="254" width="1" height="45.4" fill="#c4c4c4"/>
<rect x="961" y="256.4" width="3" height="32.4" fill="#1d80f2"/>
<rect x="967" y="299.5" width="1" height="48.5" fill="#c4c4c4"/>
<rect x="966" y="302.6" width="3" height="20.6" fill="#1d80f2"/>
<rect x="971" y="343.2" width="1" height="33.6" fill="#c4c4c4"/>
<rect x="970.5" y="353.7" width="2" height="13.1" fill="#000" stroke="#f0f0f0" stroke-width="1"/>
<rect x="976" y="344.4" width="1" height="11.8" fill="#c4c4c4"/>
<rect x="975" y="346.8" width="3" height="8.7" fill="#1d80f2"/>
<rect x="981" y="331.9" width="1" height="24.3" fill="#c4c4c4"/>
<rect x="980" y="332.6" width="3" height="22.9" fill="#1d80f2"/>
<rect x="985" y="288.9" width="1" height="44.9" fill="#c4c4c4"/>
<rect x="984.5" y="305.5" width="2" height="20.7" fill="#000" stroke="#f0f0f0" stroke-width="1"/>
<rect x="990" y="301.9" width="1" height="18.2" fill="#c4c4c4"/>
<rect x="989" y="303" width="3" height="5.3" fill="#1d80f2"/>
<rect x="995" y="292.4" width="1" height="16.6" fill="#c4c4c4"/>
<rect x="994.5" y="296" width="2" height="3" fill="#000" stroke="#f0f0f0" stroke-width="1"/>
<rect x="999" y="316" width="1" height="21.3" fill="#c4c4c4"/>
<rect x="998" y="318.4" width="3" height="9.5" fill="#1d80f2"/>
<rect x="1004" y="320.8" width="1" height="22.9" fill="#c4c4c4"/>
<rect x="1003" y="321.5" width="3" height="16.5" fill="#1d80f2"/>
<rect x="1009" y="318.4" width="1" height="14.9" fill="#c4c4c4"/>
<rect x="1008.5" y="319.6" width="2" height="12.5" fill="#000" stroke="#f0f0f0" stroke-width="1"/>
<rect x="1013" y="320.8" width="1" height="10.2" fill="#c4c4c4"/>
<rect x="1012.5" y="324.8" width="2" height="1.9" fill="#000" stroke="#f0f0f0" stroke-width="1"/>
<rect x="1018" y="311.3" width="1" height="18.9" fill="#c4c4c4"/>
<rect x="1017" y="317.2" width="3" height="11.9" fill="#1d80f2"/>
<rect x="1023" y="327.9" width="1" height="26.7" fill="#c4c4c4"/>
<rect x="1022" y="328.6" width="3" height="25.3" fill="#1d80f2"/>
<rect x="1027" y="342" width="1" height="20.1" fill="#c4c4c4"/>
<rect x="1026" y="345.1" width="3" height="12.8" fill="#1d80f2"/>
<rect x="1032" y="346.1" width="1" height="13.7" fill="#c4c4c4"/>
<rect x="1031.5" y="355.5" width="2" height="1" fill="#000" stroke="#f0f0f0" stroke-width="1"/>
<rect x="1037" y="330.2" width="1" height="18.9" fill="#c4c4c4"/>
<rect x="1036.5" y="331.9" width="2" height="11.3" fill="#000" stroke="#f0f0f0" stroke-width="1"/>
<rect x="1041" y="306.6" width="1" height="24.8" fill="#c4c4c4"/>
<rect x="1040" y="312.5" width="3" height="17" fill="#1d80f2"/>
<rect x="1046" y="326.7" width="1" height="19.4" fill="#c4c4c4"/>
<rect x="1045" y="328.6" width="3" height="11.8" fill="#1d80f2"/>
<rect x="1051" y="338" width="1" height="14.2" fill="#c4c4c4"/>
<rect x="1050.5" y="341.8" width="2" height="4.5" fill="#000" stroke="#f0f0f0" stroke-width="1"/>
<rect x="1055" y="324.3" width="1" height="23.7" fill="#c4c4c4"/>
<rect x="1054.5" y="333.1" width="2" height="3" fill="#000" stroke="#f0f0f0" stroke-width="1"/>
<rect x="1060" y="333.8" width="1" height="15.3" fill="#c4c4c4"/>
<rect x="1059" y="335.7" width="3" height="2.3" fill="#1d80f2"/>
<rect x="1065" y="351.5" width="1" height="20.1" fill="#c4c4c4"/>
<rect x="1064" y="352.2" width="3" height="18.2" fill="#1d80f2"/>
<rect x="1069" y="362.1" width="1" height="24.1" fill="#c4c4c4"/>
<rect x="1068" y="368.7" width="3" height="17.1" fill="#1d80f2"/>
<rect x="1074" y="374" width="1" height="33" fill="#c4c4c4"/>
<rect x="1073" y="376.8" width="3" height="29" fill="#1d80f2"/>
<rect x="1079" y="396.1" width="1" height="48.6" fill="#c4c4c4"/>
<rect x="1078" y="403.9" width="3" height="37.1" fill="#1d80f2"/>
<rect x="1083" y="423.5" width="1" height="14.6" fill="#c4c4c4"/>
<rect x="1082.5" y="436.3" width="2" height="1" fill="#000" stroke="#f0f0f0" stroke-width="1"/>
<rect x="1088" y="432.9" width="1" height="30" fill="#c4c4c4"/>
<rect x="1087" y="433.9" width="3" height="19.6" fill="#1d80f2"/>
<rect x="1093" y="448.8" width="1" height="34.2" fill="#c4c4c4"/>
<rect x="1092" y="449.5" width="3" height="18.9" fill="#1d80f2"/>
<rect x="1097" y="449.9" width="1" height="21.3" fill="#c4c4c4"/>
<rect x="1096.5" y="460.4" width="2" height="2.7" fill="#000" stroke="#f0f0f0" stroke-width="1"/>
<rect x="1102" y="442.8" width="1" height="18.9" fill="#c4c4c4"/>
<rect x="1101" y="456.5" width="3" height="4.1" fill="#1d80f2"/>
<rect x="1107" y="441.7" width="1" height="18.9" fill="#c4c4c4"/>
<rect x="1106.5" y="454.7" width="2" height="1" fill="#000" stroke="#f0f0f0" stroke-width="1"/>
<rect x="1111" y="436.2" width="1" height="20.3" fill="#c4c4c4"/>
<rect x="1110.5" y="439.8" width="2" height="14.8" fill="#000" stroke="#f0f0f0" stroke-width="1"/>
<rect x="1116" y="427.5" width="1" height="20.1" fill="#c4c4c4"/>
<rect x="1115" y="443.3" width="3" height="2.4" fill="#1d80f2"/>
<rect x="1121" y="424.4" width="1" height="17.3" fill="#c4c4c4"/>
<rect x="1120" y="426.8" width="3" height="14.2" fill="#1d80f2"/>
<rect x="1125" y="442.8" width="1" height="19.4" fill="#c4c4c4"/>
<rect x="1124" y="443.3" width="3" height="4.7" fill="#1d80f2"/>
<rect x="1130" y="422" width="1" height="25.6" fill="#c4c4c4"/>
<rect x="1129.5" y="435.8" width="2" height="7" fill="#000" stroke="#f0f0f0" stroke-width="1"/>
<rect x="1135" y="416.4" width="1" height="18.9" fill="#c4c4c4"/>
<rect x="1134" y="418.7" width="3" height="14.2" fill="#1d80f2"/>
<rect x="1139" y="432.9" width="1" height="27" fill="#c4c4c4"/>
<rect x="1138" y="441.7" width="3" height="17.2" fill="#1d80f2"/>
<rect x="1144" y="468.4" width="1" height="17.4" fill="#c4c4c4"/>
<rect x="1143" y="475.9" width="3" height="7.6" fill="#1d80f2"/>
<rect x="1149" y="457" width="1" height="23.2" fill="#c4c4c4"/>
<rect x="1148.5" y="459.4" width="2" height="19.6" fill="#000" stroke="#f0f0f0" stroke-width="1"/>
<rect x="1153" y="438.1" width="1" height="37.3" fill="#c4c4c4"/>
<rect x="1152.5" y="450" width="2" height="7.7" fill="#000" stroke="#f0f0f0" stroke-width="1"/>
<rect x="1158" y="402.7" width="1" height="59" fill="#c4c4c4"/>
<rect x="1157.5" y="414.5" width="2" height="40.8" fill="#000" stroke="#f0f0f0" stroke-width="1"/>
<rect x="1163" y="397.5" width="1" height="35.4" fill="#c4c4c4"/>
<rect x="1162" y="398" width="3" height="13" fill="#1d80f2"/>
<rect x="1167" y="380.2" width="1" height="34.8" fill="#c4c4c4"/>
<rect x="1166.5" y="382.4" width="2" height="25.7" fill="#000" stroke="#f0f0f0" stroke-width="1"/>
<rect x="1172" y="360.6" width="1" height="30.3" fill="#c4c4c4"/>
<rect x="1171.5" y="362.5" width="2" height="27.4" fill="#000" stroke="#f0f0f0" stroke-width="1"/>
<rect x="1177" y="347.2" width="1" height="17.2" fill="#c4c4c4"/>
<rect x="1176" y="356.6" width="3" height="3.6" fill="#1d80f2"/>
<rect x="1181" y="379.1" width="1" height="23.6" fill="#c4c4c4"/>
<rect x="1180" y="379.5" width="3" height="14.2" fill="#1d80f2"/>
<path d="M0,239.2 C3.93,239.28 15.73,240.02 23.6,239.7 C31.47,239.38 38.13,237.7 47.2,237.3 C56.27,236.9 68.15,236.9 78,237.3 C87.85,237.7 97.65,238.92 106.3,239.7 C114.95,240.48 122.02,241.33 129.9,242 C137.78,242.67 144.53,242.9 153.6,243.7 C162.67,244.5 174.47,246.02 184.3,246.8 C194.13,247.58 203.32,247.98 212.6,248.4 C221.88,248.82 223.62,249.1 240,249.3 C256.38,249.5 293.18,248.68 310.9,249.6 C328.62,250.52 334.5,253.3 346.3,254.8 C358.1,256.3 368.7,257.18 381.7,258.6 C394.7,260.02 412.48,262.75 424.3,263.3 C436.12,263.85 443.32,262.33 452.6,261.9 C461.88,261.47 471.5,261.13 480,260.7 C488.5,260.27 495.73,259.93 503.6,259.3 C511.47,258.67 517.75,257.8 527.2,256.9 C536.65,256 550.45,255.47 560.3,253.9 C570.15,252.33 576.07,249.95 586.3,247.5 C596.53,245.05 609.88,241.57 621.7,239.2 C633.52,236.83 646.57,234.8 657.2,233.3 C667.83,231.8 675.03,230.77 685.5,230.2 C695.97,229.63 706.38,229.58 720,229.9 C733.62,230.22 751.45,231.43 767.2,232.1 C782.95,232.77 798.75,233 814.5,233.9 C830.25,234.8 845.95,236.5 861.7,237.5 C877.45,238.5 892.62,239.23 909,239.9 C925.38,240.57 947.57,240.37 960,241.5 C972.43,242.63 975.73,245.37 983.6,246.7 C991.47,248.03 999.32,248.63 1007.2,249.5 C1015.08,250.37 1023.02,251.1 1030.9,251.9 C1038.78,252.7 1046.63,253.4 1054.5,254.3 C1062.37,255.2 1070.23,256.02 1078.1,257.3 C1085.97,258.58 1093.82,260.53 1101.7,262 C1109.58,263.47 1117.52,265.03 1125.4,266.1 C1133.28,267.17 1139.75,267.5 1149,268.4 C1158.25,269.3 1175.58,270.98 1180.9,271.5" fill="none" stroke="#e8dc1c" stroke-width="1.5" stroke-opacity="1" stroke-linejoin="round"/>
<path d="M0,246.8 C3.93,245.73 15.73,242.65 23.6,240.4 C31.47,238.15 39.32,235.12 47.2,233.3 C55.08,231.48 63.02,230.6 70.9,229.5 C78.78,228.4 86.63,227.63 94.5,226.7 C102.37,225.77 110.23,225.2 118.1,223.9 C125.97,222.6 133.82,220.02 141.7,218.9 C149.58,217.78 158.3,217.63 165.4,217.2 C172.5,216.77 178,216.1 184.3,216.3 C190.6,216.5 196.9,217.45 203.2,218.4 C209.5,219.35 215.97,220.77 222.1,222 C228.23,223.23 231.12,224.67 240,225.8 C248.88,226.93 263.58,226.8 275.4,228.8 C287.22,230.8 299.08,234.93 310.9,237.8 C322.72,240.67 334.5,242.85 346.3,246 C358.1,249.15 371.85,253.53 381.7,256.7 C391.55,259.87 398.3,262.63 405.4,265 C412.5,267.37 418.4,269.33 424.3,270.9 C430.2,272.47 434.12,273.53 440.8,274.4 C447.48,275.27 457.87,275.53 464.4,276.1 C470.93,276.67 471.9,276.67 480,277.8 C488.1,278.93 503.17,282.05 513,282.9 C522.83,283.75 530.72,283.28 539,282.9 C547.28,282.52 554.82,282.45 562.7,280.6 C570.58,278.75 578.43,274.57 586.3,271.8 C594.17,269.03 602.02,266.28 609.9,264 C617.78,261.72 625.72,260.65 633.6,258.1 C641.48,255.55 649.33,251.65 657.2,248.7 C665.07,245.75 672.93,242.85 680.8,240.4 C688.67,237.95 697.87,235.23 704.4,234 C710.93,232.77 713.47,233.6 720,233 C726.53,232.4 735.73,231.35 743.6,230.4 C751.47,229.45 759.32,228.28 767.2,227.3 C775.08,226.32 783.02,225.55 790.9,224.5 C798.78,223.45 806.63,222.38 814.5,221 C822.37,219.62 830.23,217.78 838.1,216.2 C845.97,214.62 853.82,213.07 861.7,211.5 C869.58,209.93 877.52,207.87 885.4,206.8 C893.28,205.73 901.92,205.62 909,205.1 C916.08,204.58 922,203.7 927.9,203.7 C933.8,203.7 939.05,204.92 944.4,205.1 C949.75,205.28 954.25,204.08 960,204.8 C965.75,205.52 973,208.13 978.9,209.4 C984.8,210.67 989.1,210.98 995.4,212.4 C1001.7,213.82 1008.82,215.13 1016.7,217.9 C1024.58,220.67 1035.22,225.38 1042.7,229 C1050.18,232.62 1054.92,235.67 1061.6,239.6 C1068.28,243.53 1076.12,248.27 1082.8,252.6 C1089.48,256.93 1094.6,260.37 1101.7,265.6 C1108.8,270.83 1117.52,278.57 1125.4,284 C1133.28,289.43 1141.92,294.57 1149,298.2 C1156.08,301.83 1162.58,303.75 1167.9,305.8 C1173.22,307.85 1178.73,309.72 1180.9,310.5" fill="none" stroke="#1c9e2c" stroke-width="1.5" stroke-opacity="1" stroke-linejoin="round"/>
<path d="M0,199.5 C3.93,199 14.93,197.8 23.6,196.5 C32.27,195.2 46.48,192.18 52,191.7 C57.52,191.22 53.55,193.28 56.7,193.6 C59.85,193.92 66.18,193.08 70.9,193.6 C75.62,194.12 79.88,196.38 85,196.7 C90.12,197.02 96.1,195.3 101.6,195.5 C107.1,195.7 112.88,196.95 118,197.9 C123.12,198.85 127.55,199.75 132.3,201.2 C137.05,202.65 141.78,204.72 146.5,206.6 C151.22,208.48 156.68,210.33 160.6,212.5 C164.52,214.67 166.05,217.43 170,219.6 C173.95,221.77 179.17,223.45 184.3,225.5 C189.43,227.55 196.08,229.33 200.8,231.9 C205.52,234.47 208.67,237.92 212.6,240.9 C216.53,243.88 219.83,247.87 224.4,249.8 C228.97,251.73 233.47,250.97 240,252.5 C246.53,254.03 255.73,256.33 263.6,259 C271.47,261.67 279.32,264.95 287.2,268.5 C295.08,272.05 303.02,276.55 310.9,280.3 C318.78,284.05 326.63,287.65 334.5,291 C342.37,294.35 350.23,297.65 358.1,300.4 C365.97,303.15 373.82,305.53 381.7,307.5 C389.58,309.47 398.3,311.13 405.4,312.2 C412.5,313.27 418.4,314.42 424.3,313.9 C430.2,313.38 435.3,310.95 440.8,309.1 C446.3,307.25 450.77,304.27 457.3,302.8 C463.83,301.33 472.28,300.73 480,300.3 C487.72,299.87 495.73,301.72 503.6,300.2 C511.47,298.68 519.32,294.75 527.2,291.2 C535.08,287.65 544.98,282.25 550.9,278.9 C556.82,275.55 558.77,274.17 562.7,271.1 C566.63,268.03 570.57,264.32 574.5,260.5 C578.43,256.68 582.37,252.33 586.3,248.2 C590.23,244.07 593.77,240.15 598.1,235.7 C602.43,231.25 607.57,225.83 612.3,221.5 C617.03,217.17 621.78,213.52 626.5,209.7 C631.22,205.88 635.88,202.55 640.6,198.6 C645.32,194.65 650.07,189.07 654.8,186 C659.53,182.93 663.88,182.35 669,180.2 C674.12,178.05 679.98,175 685.5,173.1 C691.02,171.2 696.35,170.07 702.1,168.8 C707.85,167.53 714.65,166.38 720,165.5 C725.35,164.62 728.68,163.9 734.2,163.5 C739.72,163.1 747.6,162.7 753.1,163.1 C758.6,163.5 761.7,164.33 767.2,165.9 C772.7,167.47 780.18,170.02 786.1,172.5 C792.02,174.98 797.18,177.57 802.7,180.8 C808.22,184.03 814.08,188.55 819.2,191.9 C824.32,195.25 828.67,198.42 833.4,200.9 C838.13,203.38 842.08,204.63 847.6,206.8 C853.12,208.97 860.2,211.03 866.5,213.9 C872.8,216.77 879.9,221.25 885.4,224 C890.9,226.75 894.38,228.82 899.5,230.4 C904.62,231.98 910.58,232.32 916.1,233.5 C921.62,234.68 927.48,236.25 932.6,237.5 C937.72,238.75 942.23,239.85 946.8,241 C951.37,242.15 953.87,241.8 960,244.4 C966.13,247 975.73,253.53 983.6,256.6 C991.47,259.67 999.32,260.6 1007.2,262.8 C1015.08,265 1023.02,267.57 1030.9,269.8 C1038.78,272.03 1048.2,273.83 1054.5,276.2 C1060.8,278.57 1063.98,280.45 1068.7,284 C1073.42,287.55 1078.08,292.7 1082.8,297.5 C1087.52,302.3 1093.37,309.05 1097,312.8 C1100.63,316.55 1099.6,315.65 1104.6,320 C1109.6,324.35 1120.5,333 1127,338.9 C1133.5,344.8 1139.07,350.88 1143.6,355.4 C1148.13,359.92 1150.27,363.03 1154.2,366 C1158.13,368.97 1162.67,371.1 1167.2,373.2 C1171.73,375.3 1179.03,377.7 1181.4,378.6" fill="none" stroke="#d0129a" stroke-width="1.5" stroke-opacity="1" stroke-linejoin="round"/>
<rect x="0" y="530" width="1268" height="4" fill="#4a4a4a"/>
<rect x="626" y="531" width="15" height="1" fill="#c8c8c8"/>
<rect x="626" y="533" width="15" height="1" fill="#c8c8c8"/>
<rect x="0" y="632" width="2" height="63" fill="#7d95bd"/>
<rect x="5" y="617.3" width="2" height="77.7" fill="#7d95bd"/>
<rect x="9" y="600.3" width="2" height="94.7" fill="#7d95bd"/>
<rect x="14" y="601.3" width="2" height="93.7" fill="#7d95bd"/>
<rect x="19" y="605.1" width="2" height="89.9" fill="#7d95bd"/>
<rect x="23" y="606.4" width="2" height="88.6" fill="#7d95bd"/>
<rect x="28" y="599.2" width="2" height="95.8" fill="#7d95bd"/>
<rect x="33" y="593.1" width="2" height="101.9" fill="#7d95bd"/>
<rect x="37" y="592.1" width="2" height="102.9" fill="#7d95bd"/>
<rect x="42" y="586.2" width="2" height="108.8" fill="#7d95bd"/>
<rect x="47" y="587.5" width="2" height="107.5" fill="#7d95bd"/>
<rect x="51" y="597.1" width="2" height="97.9" fill="#7d95bd"/>
<rect x="56" y="613.1" width="2" height="81.9" fill="#7d95bd"/>
<rect x="61" y="615.2" width="2" height="79.8" fill="#7d95bd"/>
<rect x="65" y="610.1" width="2" height="84.9" fill="#7d95bd"/>
<rect x="70" y="610.1" width="2" height="84.9" fill="#7d95bd"/>
<rect x="75" y="617.3" width="2" height="77.7" fill="#7d95bd"/>
<rect x="79" y="620.2" width="2" height="74.8" fill="#7d95bd"/>
<rect x="84" y="618.7" width="2" height="76.3" fill="#7d95bd"/>
<rect x="89" y="621.9" width="2" height="73.1" fill="#7d95bd"/>
<rect x="93" y="605.5" width="2" height="89.5" fill="#7d95bd"/>
<rect x="98" y="606.8" width="2" height="88.2" fill="#7d95bd"/>
<rect x="103" y="616" width="2" height="79" fill="#7d95bd"/>
<rect x="107" y="626.1" width="2" height="68.9" fill="#7d95bd"/>
<rect x="112" y="618.1" width="2" height="76.9" fill="#7d95bd"/>
<rect x="117" y="620.8" width="2" height="74.2" fill="#7d95bd"/>
<rect x="121" y="618.1" width="2" height="76.9" fill="#7d95bd"/>
<rect x="126" y="612.4" width="2" height="82.6" fill="#7d95bd"/>
<rect x="131" y="611.4" width="2" height="83.6" fill="#7d95bd"/>
<rect x="135" y="613.9" width="2" height="81.1" fill="#7d95bd"/>
<rect x="140" y="622.3" width="2" height="72.7" fill="#7d95bd"/>
<rect x="145" y="615.2" width="2" height="79.8" fill="#7d95bd"/>
<rect x="149" y="613.1" width="2" height="81.9" fill="#7d95bd"/>
<rect x="154" y="617.3" width="2" height="77.7" fill="#7d95bd"/>
<rect x="159" y="620.8" width="2" height="74.2" fill="#7d95bd"/>
<rect x="163" y="620.8" width="2" height="74.2" fill="#7d95bd"/>
<rect x="168" y="623.6" width="2" height="71.4" fill="#7d95bd"/>
<rect x="173" y="620.8" width="2" height="74.2" fill="#7d95bd"/>
<rect x="177" y="618.7" width="2" height="76.3" fill="#7d95bd"/>
<rect x="182" y="627.8" width="2" height="67.2" fill="#7d95bd"/>
<rect x="187" y="631.3" width="2" height="63.7" fill="#7d95bd"/>
<rect x="191" y="638.3" width="2" height="56.7" fill="#7d95bd"/>
<rect x="196" y="642.3" width="2" height="52.7" fill="#7d95bd"/>
<rect x="201" y="647.1" width="2" height="47.9" fill="#7d95bd"/>
<rect x="205" y="647.1" width="2" height="47.9" fill="#7d95bd"/>
<rect x="210" y="646" width="2" height="49" fill="#7d95bd"/>
<rect x="215" y="636.2" width="2" height="58.8" fill="#7d95bd"/>
<rect x="219" y="646" width="2" height="49" fill="#7d95bd"/>
<rect x="224" y="624" width="2" height="71" fill="#7d95bd"/>
<rect x="229" y="608.2" width="2" height="86.8" fill="#7d95bd"/>
<rect x="233" y="610.3" width="2" height="84.7" fill="#7d95bd"/>
<rect x="238" y="606.1" width="2" height="88.9" fill="#7d95bd"/>
<rect x="243" y="594.2" width="2" height="100.8" fill="#7d95bd"/>
<rect x="247" y="595" width="2" height="100" fill="#7d95bd"/>
<rect x="252" y="592.9" width="2" height="102.1" fill="#7d95bd"/>
<rect x="257" y="590" width="2" height="105" fill="#7d95bd"/>
<rect x="261" y="584.5" width="2" height="110.5" fill="#7d95bd"/>
<rect x="266" y="590" width="2" height="105" fill="#7d95bd"/>
<rect x="271" y="601.9" width="2" height="93.1" fill="#7d95bd"/>
<rect x="275" y="605.1" width="2" height="89.9" fill="#7d95bd"/>
<rect x="280" y="600.9" width="2" height="94.1" fill="#7d95bd"/>
<rect x="285" y="595" width="2" height="100" fill="#7d95bd"/>
<rect x="289" y="611" width="2" height="84" fill="#7d95bd"/>
<rect x="294" y="613.1" width="2" height="81.9" fill="#7d95bd"/>
<rect x="299" y="618.7" width="2" height="76.3" fill="#7d95bd"/>
<rect x="303" y="625.7" width="2" height="69.3" fill="#7d95bd"/>
<rect x="308" y="630.7" width="2" height="64.3" fill="#7d95bd"/>
<rect x="313" y="625.7" width="2" height="69.3" fill="#7d95bd"/>
<rect x="317" y="615.2" width="2" height="79.8" fill="#7d95bd"/>
<rect x="322" y="627.1" width="2" height="67.9" fill="#7d95bd"/>
<rect x="327" y="629.2" width="2" height="65.8" fill="#7d95bd"/>
<rect x="331" y="626.1" width="2" height="68.9" fill="#7d95bd"/>
<rect x="336" y="626.5" width="2" height="68.5" fill="#7d95bd"/>
<rect x="341" y="622.3" width="2" height="72.7" fill="#7d95bd"/>
<rect x="345" y="621.9" width="2" height="73.1" fill="#7d95bd"/>
<rect x="350" y="613.9" width="2" height="81.1" fill="#7d95bd"/>
<rect x="355" y="605.1" width="2" height="89.9" fill="#7d95bd"/>
<rect x="359" y="600.9" width="2" height="94.1" fill="#7d95bd"/>
<rect x="364" y="603" width="2" height="92" fill="#7d95bd"/>
<rect x="369" y="595" width="2" height="100" fill="#7d95bd"/>
<rect x="373" y="611" width="2" height="84" fill="#7d95bd"/>
<rect x="378" y="613.9" width="2" height="81.1" fill="#7d95bd"/>
<rect x="383" y="616.6" width="2" height="78.4" fill="#7d95bd"/>
<rect x="387" y="617.3" width="2" height="77.7" fill="#7d95bd"/>
<rect x="392" y="608.9" width="2" height="86.1" fill="#7d95bd"/>
<rect x="397" y="607.6" width="2" height="87.4" fill="#7d95bd"/>
<rect x="401" y="601.9" width="2" height="93.1" fill="#7d95bd"/>
<rect x="406" y="610.3" width="2" height="84.7" fill="#7d95bd"/>
<rect x="411" y="601.9" width="2" height="93.1" fill="#7d95bd"/>
<rect x="415" y="608.9" width="2" height="86.1" fill="#7d95bd"/>
<rect x="420" y="611.8" width="2" height="83.2" fill="#7d95bd"/>
<rect x="425" y="582" width="2" height="113" fill="#7d95bd"/>
<rect x="429" y="578.2" width="2" height="116.8" fill="#7d95bd"/>
<rect x="434" y="590.8" width="2" height="104.2" fill="#7d95bd"/>
<rect x="439" y="583" width="2" height="112" fill="#7d95bd"/>
<rect x="443" y="583" width="2" height="112" fill="#7d95bd"/>
<rect x="448" y="589.3" width="2" height="105.7" fill="#7d95bd"/>
<rect x="453" y="586.2" width="2" height="108.8" fill="#7d95bd"/>
<rect x="457" y="584.1" width="2" height="110.9" fill="#7d95bd"/>
<rect x="462" y="589.3" width="2" height="105.7" fill="#7d95bd"/>
<rect x="467" y="586.2" width="2" height="108.8" fill="#7d95bd"/>
<rect x="471" y="578.8" width="2" height="116.2" fill="#7d95bd"/>
<rect x="476" y="590" width="2" height="105" fill="#7d95bd"/>
<rect x="481" y="590" width="2" height="105" fill="#7d95bd"/>
<rect x="485" y="585.1" width="2" height="109.9" fill="#7d95bd"/>
<rect x="490" y="585.8" width="2" height="109.2" fill="#7d95bd"/>
<rect x="495" y="590" width="2" height="105" fill="#7d95bd"/>
<rect x="499" y="582.4" width="2" height="112.6" fill="#7d95bd"/>
<rect x="504" y="588.3" width="2" height="106.7" fill="#7d95bd"/>
<rect x="509" y="579.5" width="2" height="115.5" fill="#7d95bd"/>
<rect x="513" y="574.6" width="2" height="120.4" fill="#7d95bd"/>
<rect x="518" y="574.6" width="2" height="120.4" fill="#7d95bd"/>
<rect x="523" y="569.4" width="2" height="125.6" fill="#7d95bd"/>
<rect x="527" y="562.7" width="2" height="132.3" fill="#7d95bd"/>
<rect x="532" y="568.3" width="2" height="126.7" fill="#7d95bd"/>
<rect x="537" y="566.9" width="2" height="128.1" fill="#7d95bd"/>
<rect x="541" y="569.4" width="2" height="125.6" fill="#7d95bd"/>
<rect x="546" y="563.5" width="2" height="131.5" fill="#7d95bd"/>
<rect x="551" y="585.1" width="2" height="109.9" fill="#7d95bd"/>
<rect x="555" y="577.8" width="2" height="117.2" fill="#7d95bd"/>
<rect x="560" y="571.1" width="2" height="123.9" fill="#7d95bd"/>
<rect x="565" y="562.7" width="2" height="132.3" fill="#7d95bd"/>
<rect x="569" y="557.8" width="2" height="137.2" fill="#7d95bd"/>
<rect x="574" y="555.7" width="2" height="139.3" fill="#7d95bd"/>
<rect x="579" y="556.8" width="2" height="138.2" fill="#7d95bd"/>
<rect x="583" y="550.1" width="2" height="144.9" fill="#7d95bd"/>
<rect x="588" y="557.8" width="2" height="137.2" fill="#7d95bd"/>
<rect x="593" y="560.6" width="2" height="134.4" fill="#7d95bd"/>
<rect x="597" y="558.5" width="2" height="136.5" fill="#7d95bd"/>
<rect x="602" y="556.8" width="2" height="138.2" fill="#7d95bd"/>
<rect x="607" y="562" width="2" height="133" fill="#7d95bd"/>
<rect x="611" y="572.5" width="2" height="122.5" fill="#7d95bd"/>
<rect x="616" y="593.5" width="2" height="101.5" fill="#7d95bd"/>
<rect x="621" y="603" width="2" height="92" fill="#7d95bd"/>
<rect x="625" y="602.4" width="2" height="92.6" fill="#7d95bd"/>
<rect x="630" y="596.3" width="2" height="98.7" fill="#7d95bd"/>
<rect x="635" y="592.1" width="2" height="102.9" fill="#7d95bd"/>
<rect x="639" y="588.3" width="2" height="106.7" fill="#7d95bd"/>
<rect x="644" y="589.3" width="2" height="105.7" fill="#7d95bd"/>
<rect x="649" y="584.5" width="2" height="110.5" fill="#7d95bd"/>
<rect x="653" y="585.1" width="2" height="109.9" fill="#7d95bd"/>
<rect x="658" y="582" width="2" height="113" fill="#7d95bd"/>
<rect x="663" y="607.6" width="2" height="87.4" fill="#7d95bd"/>
<rect x="667" y="623.6" width="2" height="71.4" fill="#7d95bd"/>
<rect x="672" y="620.8" width="2" height="74.2" fill="#7d95bd"/>
<rect x="677" y="622.9" width="2" height="72.1" fill="#7d95bd"/>
<rect x="681" y="616" width="2" height="79" fill="#7d95bd"/>
<rect x="686" y="615.2" width="2" height="79.8" fill="#7d95bd"/>
<rect x="691" y="627.1" width="2" height="67.9" fill="#7d95bd"/>
<rect x="695" y="620.2" width="2" height="74.8" fill="#7d95bd"/>
<rect x="700" y="626.1" width="2" height="68.9" fill="#7d95bd"/>
<rect x="705" y="631.3" width="2" height="63.7" fill="#7d95bd"/>
<rect x="709" y="629.2" width="2" height="65.8" fill="#7d95bd"/>
<rect x="714" y="624" width="2" height="71" fill="#7d95bd"/>
<rect x="719" y="629.2" width="2" height="65.8" fill="#7d95bd"/>
<rect x="723" y="620.8" width="2" height="74.2" fill="#7d95bd"/>
<rect x="728" y="619.4" width="2" height="75.6" fill="#7d95bd"/>
<rect x="733" y="621.5" width="2" height="73.5" fill="#7d95bd"/>
<rect x="737" y="628.2" width="2" height="66.8" fill="#7d95bd"/>
<rect x="742" y="634.1" width="2" height="60.9" fill="#7d95bd"/>
<rect x="747" y="634.1" width="2" height="60.9" fill="#7d95bd"/>
<rect x="751" y="630.3" width="2" height="64.7" fill="#7d95bd"/>
<rect x="756" y="639.1" width="2" height="55.9" fill="#7d95bd"/>
<rect x="761" y="638.3" width="2" height="56.7" fill="#7d95bd"/>
<rect x="765" y="617.3" width="2" height="77.7" fill="#7d95bd"/>
<rect x="770" y="634.1" width="2" height="60.9" fill="#7d95bd"/>
<rect x="775" y="638.3" width="2" height="56.7" fill="#7d95bd"/>
<rect x="779" y="638.3" width="2" height="56.7" fill="#7d95bd"/>
<rect x="784" y="634.9" width="2" height="60.1" fill="#7d95bd"/>
<rect x="789" y="639.1" width="2" height="55.9" fill="#7d95bd"/>
<rect x="793" y="625" width="2" height="70" fill="#7d95bd"/>
<rect x="798" y="623.6" width="2" height="71.4" fill="#7d95bd"/>
<rect x="803" y="626.1" width="2" height="68.9" fill="#7d95bd"/>
<rect x="807" y="630.3" width="2" height="64.7" fill="#7d95bd"/>
<rect x="812" y="630.3" width="2" height="64.7" fill="#7d95bd"/>
<rect x="817" y="624" width="2" height="71" fill="#7d95bd"/>
<rect x="821" y="609.3" width="2" height="85.7" fill="#7d95bd"/>
<rect x="826" y="595" width="2" height="100" fill="#7d95bd"/>
<rect x="830" y="612.4" width="2" height="82.6" fill="#7d95bd"/>
<rect x="835" y="591.4" width="2" height="103.6" fill="#7d95bd"/>
<rect x="840" y="593.5" width="2" height="101.5" fill="#7d95bd"/>
<rect x="844" y="595.6" width="2" height="99.4" fill="#7d95bd"/>
<rect x="849" y="597.1" width="2" height="97.9" fill="#7d95bd"/>
<rect x="854" y="594.6" width="2" height="100.4" fill="#7d95bd"/>
<rect x="858" y="596.3" width="2" height="98.7" fill="#7d95bd"/>
<rect x="863" y="602.6" width="2" height="92.4" fill="#7d95bd"/>
<rect x="868" y="602.6" width="2" height="92.4" fill="#7d95bd"/>
<rect x="872" y="609.3" width="2" height="85.7" fill="#7d95bd"/>
<rect x="877" y="618.1" width="2" height="76.9" fill="#7d95bd"/>
<rect x="882" y="617.3" width="2" height="77.7" fill="#7d95bd"/>
<rect x="886" y="611.4" width="2" height="83.6" fill="#7d95bd"/>
<rect x="891" y="610.3" width="2" height="84.7" fill="#7d95bd"/>
<rect x="896" y="613.9" width="2" height="81.1" fill="#7d95bd"/>
<rect x="900" y="604" width="2" height="91" fill="#7d95bd"/>
<rect x="905" y="601.3" width="2" height="93.7" fill="#7d95bd"/>
<rect x="910" y="589.3" width="2" height="105.7" fill="#7d95bd"/>
<rect x="914" y="583.7" width="2" height="111.3" fill="#7d95bd"/>
<rect x="919" y="592.1" width="2" height="102.9" fill="#7d95bd"/>
<rect x="924" y="613.9" width="2" height="81.1" fill="#7d95bd"/>
<rect x="928" y="622.3" width="2" height="72.7" fill="#7d95bd"/>
<rect x="933" y="625" width="2" height="70" fill="#7d95bd"/>
<rect x="938" y="619.4" width="2" height="75.6" fill="#7d95bd"/>
<rect x="942" y="618.1" width="2" height="76.9" fill="#7d95bd"/>
<rect x="947" y="622.3" width="2" height="72.7" fill="#7d95bd"/>
<rect x="952" y="621.5" width="2" height="73.5" fill="#7d95bd"/>
<rect x="956" y="613.1" width="2" height="81.9" fill="#7d95bd"/>
<rect x="961" y="627.1" width="2" height="67.9" fill="#7d95bd"/>
<rect x="966" y="640.4" width="2" height="54.6" fill="#7d95bd"/>
<rect x="970" y="648.1" width="2" height="46.9" fill="#7d95bd"/>
<rect x="975" y="648.1" width="2" height="46.9" fill="#7d95bd"/>
<rect x="980" y="648.1" width="2" height="46.9" fill="#7d95bd"/>
<rect x="984" y="618.1" width="2" height="76.9" fill="#7d95bd"/>
<rect x="989" y="619.4" width="2" height="75.6" fill="#7d95bd"/>
<rect x="994" y="612.4" width="2" height="82.6" fill="#7d95bd"/>
<rect x="998" y="624" width="2" height="71" fill="#7d95bd"/>
<rect x="1003" y="627.8" width="2" height="67.2" fill="#7d95bd"/>
<rect x="1008" y="618.1" width="2" height="76.9" fill="#7d95bd"/>
<rect x="1012" y="620.2" width="2" height="74.8" fill="#7d95bd"/>
<rect x="1017" y="622.3" width="2" height="72.7" fill="#7d95bd"/>
<rect x="1022" y="630.7" width="2" height="64.3" fill="#7d95bd"/>
<rect x="1026" y="632" width="2" height="63" fill="#7d95bd"/>
<rect x="1031" y="631.3" width="2" height="63.7" fill="#7d95bd"/>
<rect x="1036" y="616" width="2" height="79" fill="#7d95bd"/>
<rect x="1040" y="615.2" width="2" height="79.8" fill="#7d95bd"/>
<rect x="1045" y="620.2" width="2" height="74.8" fill="#7d95bd"/>
<rect x="1050" y="620.2" width="2" height="74.8" fill="#7d95bd"/>
<rect x="1054" y="615.2" width="2" height="79.8" fill="#7d95bd"/>
<rect x="1059" y="617.3" width="2" height="77.7" fill="#7d95bd"/>
<rect x="1064" y="631.3" width="2" height="63.7" fill="#7d95bd"/>
<rect x="1068" y="637" width="2" height="58" fill="#7d95bd"/>
<rect x="1073" y="642.5" width="2" height="52.5" fill="#7d95bd"/>
<rect x="1078" y="651.3" width="2" height="43.7" fill="#7d95bd"/>
<rect x="1082" y="649.2" width="2" height="45.8" fill="#7d95bd"/>
<rect x="1087" y="653.4" width="2" height="41.6" fill="#7d95bd"/>
<rect x="1092" y="655.9" width="2" height="39.1" fill="#7d95bd"/>
<rect x="1096" y="651.3" width="2" height="43.7" fill="#7d95bd"/>
<rect x="1101" y="650.2" width="2" height="44.8" fill="#7d95bd"/>
<rect x="1106" y="646.7" width="2" height="48.3" fill="#7d95bd"/>
<rect x="1110" y="634.1" width="2" height="60.9" fill="#7d95bd"/>
<rect x="1115" y="637.6" width="2" height="57.4" fill="#7d95bd"/>
<rect x="1120" y="632" width="2" height="63" fill="#7d95bd"/>
<rect x="1124" y="635.5" width="2" height="59.5" fill="#7d95bd"/>
<rect x="1129" y="626.1" width="2" height="68.9" fill="#7d95bd"/>
<rect x="1134" y="624.4" width="2" height="70.6" fill="#7d95bd"/>
<rect x="1138" y="635.5" width="2" height="59.5" fill="#7d95bd"/>
<rect x="1143" y="642.9" width="2" height="52.1" fill="#7d95bd"/>
<rect x="1148" y="628.2" width="2" height="66.8" fill="#7d95bd"/>
<rect x="1152" y="620.8" width="2" height="74.2" fill="#7d95bd"/>
<rect x="1157" y="603" width="2" height="92" fill="#7d95bd"/>
<rect x="1162" y="601.9" width="2" height="93.1" fill="#7d95bd"/>
<rect x="1166" y="590.4" width="2" height="104.6" fill="#7d95bd"/>
<rect x="1171" y="583.7" width="2" height="111.3" fill="#7d95bd"/>
<rect x="1176" y="582.4" width="2" height="112.6" fill="#7d95bd"/>
<rect x="1180" y="599.2" width="2" height="95.8" fill="#7d95bd"/>
<path d="M0,607.19 C0.87,607.72 2.05,609.64 5.2,610.34 C8.35,611.04 14.87,611.64 18.9,611.39 C22.93,611.15 25.55,609.71 29.4,608.87 C33.25,608.03 38.15,606.91 42,606.35 C45.85,605.79 49,605.72 52.5,605.51 C56,605.3 59.5,605.62 63,605.09 C66.5,604.57 70.35,602.71 73.5,602.36 C76.65,602.01 79.45,602.36 81.9,602.99 C84.35,603.62 85.4,605.51 88.2,606.14 C91,606.77 94.85,605.83 98.7,606.77 C102.55,607.72 107.45,610.17 111.3,611.81 C115.15,613.46 118.3,616.08 121.8,616.64 C125.3,617.2 128.8,615.07 132.3,615.17 C135.8,615.28 138.95,616.92 142.8,617.27 C146.65,617.62 151.2,617.03 155.4,617.27 C159.6,617.52 164.15,618.39 168,618.74 C171.85,619.09 175,619.2 178.5,619.37 C182,619.55 185.5,619.02 189,619.79 C192.5,620.56 196,622.59 199.5,623.99 C203,625.39 206.15,626.79 210,628.19 C213.85,629.59 219.1,631.97 222.6,632.39 C226.1,632.81 228.1,631.13 231,630.71 C233.9,630.29 237.1,630.57 240,629.87 C242.9,629.17 244.9,628.47 248.4,626.51 C251.9,624.55 257.15,620.7 261,618.11 C264.85,615.52 268,613.32 271.5,610.97 C275,608.63 278.85,605.72 281.99,604.04 C285.14,602.36 287.24,601.42 290.39,600.89 C293.54,600.37 297.39,600.47 300.89,600.89 C304.39,601.31 307.54,602.01 311.39,603.41 C315.24,604.81 319.79,606.98 323.99,609.29 C328.19,611.6 331.69,615.45 336.59,617.27 C341.49,619.09 348.84,619.72 353.39,620.21 C357.94,620.7 361.08,620.63 363.88,620.21 C366.68,619.79 367.03,618.46 370.18,617.69 C373.33,616.92 379.63,616.01 382.78,615.59 C385.93,615.17 386.28,615.8 389.08,615.17 C391.88,614.54 395.73,612.86 399.58,611.81 C403.43,610.76 408.68,609.47 412.18,608.87 C415.68,608.28 418.48,608.7 420.58,608.24 C422.68,607.79 421.63,607.09 424.78,606.14 C427.93,605.2 435.63,603.52 439.48,602.57 C443.32,601.63 445.07,601.63 447.87,600.47 C450.67,599.32 453.12,596.97 456.27,595.64 C459.42,594.31 463.27,593.44 466.77,592.49 C470.27,591.55 473.32,591.2 477.27,589.97 C481.22,588.75 486.54,585.7 490.5,585.14 C494.45,584.58 497.5,586.51 501,586.61 C504.5,586.72 508,586.37 511.5,585.77 C515,585.18 518.5,584.02 521.99,583.04 C525.49,582.06 528.99,580.7 532.49,579.9 C535.99,579.09 539.84,578.74 542.99,578.22 C546.14,577.69 547.89,577.52 551.39,576.75 C554.89,575.98 560.14,574.82 563.99,573.6 C567.84,572.37 570.99,570.8 574.49,569.4 C577.99,568 581.14,565.9 584.99,565.2 C588.84,564.5 593.74,565.72 597.59,565.2 C601.43,564.67 604.58,562.05 608.08,562.05 C611.58,562.05 615.08,564.15 618.58,565.2 C622.08,566.25 625.93,567.23 629.08,568.35 C632.23,569.47 634.68,570.52 637.48,571.92 C640.28,573.32 642.73,575.24 645.88,576.75 C649.03,578.25 653.23,579.2 656.38,580.94 C659.53,582.69 661.98,585.04 664.78,587.24 C667.58,589.45 670.38,592.07 673.18,594.17 C675.98,596.27 678.78,598.37 681.57,599.84 C684.37,601.31 686.82,601.77 689.97,602.99 C693.12,604.22 696.97,605.62 700.47,607.19 C703.97,608.77 707.72,610.62 710.97,612.44 C714.23,614.26 716.4,616.26 720,618.11 C723.6,619.97 728.75,622.59 732.6,623.57 C736.45,624.55 738.2,623.22 743.1,623.99 C748,624.76 756.75,627.31 761.99,628.19 C767.24,629.06 771.44,628.82 774.59,629.24 C777.74,629.66 777.04,630.18 780.89,630.71 C784.74,631.23 792.44,632.11 797.69,632.39 C802.94,632.67 808.54,632.67 812.39,632.39 C816.24,632.11 817.99,631.76 820.79,630.71 C823.59,629.66 826.04,627.63 829.19,626.09 C832.34,624.55 836.19,623.39 839.69,621.47 C843.18,619.55 846.68,616.75 850.18,614.54 C853.68,612.34 857.18,609.82 860.68,608.24 C864.18,606.67 867.33,605.9 871.18,605.09 C875.03,604.29 879.23,603.69 883.78,603.41 C888.33,603.13 894.28,603.2 898.48,603.41 C902.68,603.62 905.83,604.74 908.98,604.67 C912.13,604.6 914.93,603.2 917.38,602.99 C919.83,602.78 921.57,602.89 923.67,603.41 C925.77,603.94 926.82,605.16 929.97,606.14 C933.12,607.12 939.07,608.7 942.57,609.29 C946.07,609.89 948.07,609.5 950.97,609.71 C953.88,609.92 957.45,610.2 960,610.55 C962.55,610.9 964.2,610.8 966.3,611.81 C968.4,612.83 970.32,614.79 972.6,616.64 C974.87,618.5 977.15,621.19 979.95,622.94 C982.75,624.69 985.72,626.44 989.4,627.14 C993.07,627.84 996.75,627.03 1001.99,627.14 C1007.24,627.24 1016.69,627.42 1020.89,627.77 C1025.09,628.12 1025.09,628.99 1027.19,629.24 C1029.29,629.48 1031.04,630.04 1033.49,629.24 C1035.94,628.43 1038.74,625.7 1041.89,624.41 C1045.04,623.11 1049.41,621.89 1052.39,621.47 C1055.36,621.05 1057.64,621.54 1059.74,621.89 C1061.84,622.24 1062.71,623.22 1064.99,623.57 C1067.26,623.92 1070.94,623.5 1073.39,623.99 C1075.84,624.48 1077.24,625.39 1079.69,626.51 C1082.13,627.63 1084.93,629.45 1088.08,630.71 C1091.23,631.97 1095.08,632.91 1098.58,634.07 C1102.08,635.22 1105.58,636.69 1109.08,637.64 C1112.58,638.58 1116.78,638.93 1119.58,639.74 C1122.38,640.54 1121.85,642.01 1125.88,642.47 C1129.9,642.92 1139.88,643.03 1143.73,642.47 C1147.58,641.91 1146.7,640.26 1148.98,639.11 C1151.25,637.95 1154.58,637.18 1157.38,635.54 C1160.17,633.89 1163.32,631.23 1165.77,629.24 C1168.22,627.24 1170.15,625.42 1172.07,623.57 C1174,621.71 1175.85,619.37 1177.32,618.11 C1178.79,616.85 1180.3,616.36 1180.89,616.01" fill="none" stroke="#e6e6e6" stroke-width="1.3" stroke-opacity="1" stroke-linejoin="round"/>
<rect x="1210" y="1" width="2" height="529" fill="#b4b4b4"/>
<rect x="1210" y="534" width="2" height="177" fill="#6b82a8"/>
<rect x="0" y="710" width="1212" height="2" fill="#c8c8c8"/>
<rect x="1212" y="18" width="3" height="1" fill="#dcdcdc"/>
<rect x="1212" y="121" width="3" height="1" fill="#dcdcdc"/>
<rect x="1212" y="224" width="3" height="1" fill="#dcdcdc"/>
<rect x="1212" y="327" width="3" height="1" fill="#dcdcdc"/>
<rect x="1212" y="430" width="3" height="1" fill="#dcdcdc"/>
<path d="M1211 66.4 L1218 69.4 L1211 72.4 Z" fill="#f0f0f0"/>
<path d="M1211 169.4 L1218 172.4 L1211 175.4 Z" fill="#f0f0f0"/>
<path d="M1211 272.4 L1218 275.4 L1211 278.4 Z" fill="#f0f0f0"/>
<path d="M1211 375.4 L1218 378.4 L1211 381.4 Z" fill="#f0f0f0"/>
<path d="M1211 478.4 L1218 481.4 L1211 484.4 Z" fill="#f0f0f0"/>
<rect x="1212" y="570" width="3" height="1" fill="#6b82a8"/>
<rect x="1212" y="606" width="3" height="1" fill="#6b82a8"/>
<rect x="1212" y="641" width="3" height="1" fill="#6b82a8"/>
<rect x="1212" y="677" width="3" height="1" fill="#6b82a8"/>
<path d="M1211 549.2 L1218 552.2 L1211 555.2 Z" fill="#6b82a8"/>
<path d="M1211 584.9 L1218 587.9 L1211 590.9 Z" fill="#6b82a8"/>
<path d="M1211 620.6 L1218 623.6 L1211 626.6 Z" fill="#6b82a8"/>
<path d="M1211 656.3 L1218 659.3 L1211 662.3 Z" fill="#6b82a8"/>
<path d="M1211 692 L1218 695 L1211 698 Z" fill="#6b82a8"/>
<rect x="86" y="712" width="1" height="3" fill="#c8c8c8"/>
<rect x="183" y="712" width="1" height="3" fill="#c8c8c8"/>
<rect x="277" y="712" width="1" height="3" fill="#c8c8c8"/>
<rect x="375" y="712" width="1" height="3" fill="#c8c8c8"/>
<rect x="468" y="712" width="1" height="3" fill="#c8c8c8"/>
<rect x="562" y="712" width="1" height="3" fill="#c8c8c8"/>
<rect x="664" y="712" width="1" height="3" fill="#c8c8c8"/>
<rect x="766" y="712" width="1" height="3" fill="#c8c8c8"/>
<rect x="855" y="712" width="1" height="3" fill="#c8c8c8"/>
<rect x="958" y="712" width="1" height="3" fill="#c8c8c8"/>
<rect x="1060" y="712" width="1" height="3" fill="#c8c8c8"/>
<rect x="1154" y="712" width="1" height="3" fill="#c8c8c8"/>
<rect x="276" y="727" width="1" height="17" fill="#a8a8a8"/>
<text x="1220" y="73.9" font-size="12" fill="#f3f0e6" text-anchor="start">70</text>
<text x="1220" y="176.9" font-size="12" fill="#f3f0e6" text-anchor="start">65</text>
<text x="1220" y="485.9" font-size="12" fill="#f3f0e6" text-anchor="start">50</text>
<text x="1220" y="556.7" font-size="12" fill="#f3f0e6" text-anchor="start">80</text>
<text x="1220" y="592.4" font-size="12" fill="#f3f0e6" text-anchor="start">60</text>
<text x="1220" y="628.1" font-size="12" fill="#f3f0e6" text-anchor="start">40</text>
<text x="1220" y="663.8" font-size="12" fill="#f3f0e6" text-anchor="start">20</text>
<text x="1220" y="699.5" font-size="12" fill="#f3f0e6" text-anchor="start">0</text>
<text x="34" y="724.9" font-size="12" fill="#f3f0e6" text-anchor="middle">Oct</text>
<text x="134" y="724.9" font-size="12" fill="#f3f0e6" text-anchor="middle">Nov</text>
<text x="229.5" y="724.9" font-size="12" fill="#f3f0e6" text-anchor="middle">Dec</text>
<text x="325" y="724.9" font-size="12" fill="#f3f0e6" text-anchor="middle">Jan</text>
<text x="420.5" y="724.9" font-size="12" fill="#f3f0e6" text-anchor="middle">Feb</text>
<text x="513.5" y="724.9" font-size="12" fill="#f3f0e6" text-anchor="middle">Mar</text>
<text x="611.5" y="724.9" font-size="12" fill="#f3f0e6" text-anchor="middle">Apr</text>
<text x="714.5" y="724.9" font-size="12" fill="#f3f0e6" text-anchor="middle">May</text>
<text x="810" y="724.9" font-size="12" fill="#f3f0e6" text-anchor="middle">Jun</text>
<text x="906" y="724.9" font-size="12" fill="#f3f0e6" text-anchor="middle">Jul</text>
<text x="1008" y="724.9" font-size="12" fill="#f3f0e6" text-anchor="middle">Aug</text>
<text x="1106.5" y="724.9" font-size="12" fill="#f3f0e6" text-anchor="middle">Sep</text>
<text x="1199.5" y="724.9" font-size="12" fill="#f3f0e6" text-anchor="middle">Oct</text>
<text x="138.2" y="740.7" font-size="12" fill="#f3f0e6" text-anchor="middle">2023</text>
<text x="743.5" y="740.7" font-size="12" fill="#f3f0e6" text-anchor="middle">2024</text>
<text x="2" y="757.6" font-size="12" fill="#f3f0e6" text-anchor="start" textLength="533" lengthAdjust="spacingAndGlyphs" xml:space="preserve">OXY US Equity (Occidental Petroleum Corp) Delta stock pick  Daily 05OCT2023-09OCT2024</text>
<text x="716" y="757.6" font-size="12" fill="#f3f0e6" text-anchor="start" textLength="238" lengthAdjust="spacingAndGlyphs">Copyright© 2024 Bloomberg Finance L.P.</text>
<text x="1135.5" y="757.6" font-size="12" fill="#f3f0e6" text-anchor="start" textLength="128.5" lengthAdjust="spacingAndGlyphs">09-Oct-2024 16:40:42</text>
<text x="293" y="73.2" font-size="13" fill="#f3f0e6" text-anchor="start" textLength="61.5" lengthAdjust="spacingAndGlyphs" xml:space="preserve">Last Price</text>
<text x="437" y="73.2" font-size="13" fill="#f3f0e6" text-anchor="start" textLength="31.6" lengthAdjust="spacingAndGlyphs">54.32</text>
<text x="293" y="89.2" font-size="13" fill="#f3f0e6" text-anchor="start" textLength="104.9" lengthAdjust="spacingAndGlyphs" xml:space="preserve">High on 04/12/24</text>
<text x="437" y="89.2" font-size="13" fill="#f3f0e6" text-anchor="start" textLength="38.5" lengthAdjust="spacingAndGlyphs">71.185</text>
<text x="293" y="105.2" font-size="13" fill="#f3f0e6" text-anchor="start" textLength="46.7" lengthAdjust="spacingAndGlyphs" xml:space="preserve">Average</text>
<text x="437" y="105.2" font-size="13" fill="#f3f0e6" text-anchor="start" textLength="38.5" lengthAdjust="spacingAndGlyphs">60.326</text>
<text x="293" y="121.2" font-size="13" fill="#f3f0e6" text-anchor="start" textLength="102.3" lengthAdjust="spacingAndGlyphs" xml:space="preserve">Low on 09/26/24</text>
<text x="437" y="121.2" font-size="13" fill="#f3f0e6" text-anchor="start" textLength="31.6" lengthAdjust="spacingAndGlyphs">49.75</text>
<text x="293" y="137.2" font-size="13" fill="#f3f0e6" text-anchor="start" textLength="130.9" lengthAdjust="spacingAndGlyphs" xml:space="preserve">SMAVG (50)  on Close</text>
<text x="437" y="137.2" font-size="13" fill="#f3f0e6" text-anchor="start" textLength="38.5" lengthAdjust="spacingAndGlyphs">54.939</text>
<text x="293" y="153.2" font-size="13" fill="#f3f0e6" text-anchor="start" textLength="137.4" lengthAdjust="spacingAndGlyphs" xml:space="preserve">SMAVG (100)  on Close</text>
<text x="437" y="153.2" font-size="13" fill="#f3f0e6" text-anchor="start" textLength="38.5" lengthAdjust="spacingAndGlyphs">58.269</text>
<text x="293" y="169.2" font-size="13" fill="#f3f0e6" text-anchor="start" textLength="137.4" lengthAdjust="spacingAndGlyphs" xml:space="preserve">SMAVG (200)  on Close</text>
<text x="437" y="169.2" font-size="13" fill="#f3f0e6" text-anchor="start" textLength="38.5" lengthAdjust="spacingAndGlyphs">60.133</text>
<rect x="266.5" y="63.5" width="7" height="7" fill="none" stroke="#8c8c8c" stroke-width="1"/>
<rect x="268" y="67" width="4" height="1" fill="#8c8c8c"/>
<rect x="270" y="71" width="1" height="93" fill="#8c8c8c"/>
<rect x="270" y="85" width="4" height="1" fill="#8c8c8c"/>
<rect x="270" y="101" width="4" height="1" fill="#8c8c8c"/>
<rect x="270" y="117" width="4" height="1" fill="#8c8c8c"/>
<rect x="270" y="133" width="4" height="1" fill="#8c8c8c"/>
<rect x="270" y="149" width="4" height="1" fill="#8c8c8c"/>
<rect x="270" y="165" width="4" height="1" fill="#8c8c8c"/>
<rect x="277" y="62.5" width="12" height="12" fill="#ffffff"/>
<rect x="277" y="126.5" width="12" height="12" fill="#e8129e"/>
<rect x="277" y="142.5" width="12" height="12" fill="#1fb83e"/>
<rect x="277" y="158.5" width="12" height="12" fill="#f7e81a"/>
<rect x="283" y="78" width="1" height="13" fill="#bbb"/><rect x="280" y="78" width="7" height="1" fill="#bbb"/>
<rect x="278" y="100" width="11" height="1" fill="#999"/><circle cx="283.5" cy="100.5" r="1.8" fill="none" stroke="#bbb" stroke-width="1"/>
<rect x="283" y="110" width="1" height="13" fill="#bbb"/><rect x="280" y="122" width="7" height="1" fill="#bbb"/>
<rect x="4.5" y="539" width="156" height="28.5" rx="4" fill="#1a1a1a" fill-opacity="0.6"/>
<rect x="11" y="550.5" width="6.5" height="6.5" fill="none" stroke="#8c8c8c" stroke-width="1"/>
<rect x="12.5" y="553.5" width="4" height="1" fill="#8c8c8c"/><rect x="14" y="552" width="1" height="4" fill="#8c8c8c"/>
<rect x="21" y="548" width="12" height="12" fill="#7d95bd"/>
<text x="36.7" y="559.3" font-size="13" fill="#f3f0e6" text-anchor="start" textLength="65.1" lengthAdjust="spacingAndGlyphs">RSI 14 Day</text>
<text x="108.1" y="559.3" font-size="13" fill="#f3f0e6" text-anchor="start" textLength="46.2" lengthAdjust="spacingAndGlyphs">53.2880</text>
<path d="M1212 272.66 L1218 263.16 L1268 263.16 L1268 282.16 L1218 282.16 Z" fill="#000"/>
<path d="M1213 272.66 L1218 264.16 L1267 264.16 L1267 281.16 L1218 281.16 Z" fill="#f7e81a"/>
<text x="1220" y="277.26" font-size="13" fill="#111" text-anchor="start" textLength="37.6" lengthAdjust="spacingAndGlyphs">60.133</text>
<path d="M1212 311.06 L1218 301.56 L1268 301.56 L1268 320.56 L1218 320.56 Z" fill="#000"/>
<path d="M1213 311.06 L1218 302.56 L1267 302.56 L1267 319.56 L1218 319.56 Z" fill="#1fb83e"/>
<text x="1220" y="315.66" font-size="13" fill="#f4f4f4" text-anchor="start" textLength="37.6" lengthAdjust="spacingAndGlyphs">58.269</text>
<path d="M1212 379.66 L1218 370.16 L1268 370.16 L1268 389.16 L1218 389.16 Z" fill="#000"/>
<path d="M1213 379.66 L1218 371.16 L1267 371.16 L1267 388.16 L1218 388.16 Z" fill="#e8129e"/>
<text x="1220" y="384.26" font-size="13" fill="#f4f4f4" text-anchor="start" textLength="37.6" lengthAdjust="spacingAndGlyphs">54.939</text>
<path d="M1212 392.41 L1218 382.91 L1268 382.91 L1268 401.91 L1218 401.91 Z" fill="#000"/>
<path d="M1213 392.41 L1218 383.91 L1267 383.91 L1267 400.91 L1218 400.91 Z" fill="#ffffff"/>
<text x="1220" y="397.01" font-size="13" fill="#111" text-anchor="start" textLength="31" lengthAdjust="spacingAndGlyphs">54.32</text>
<path d="M1212 599.88 L1218 590.88 L1268 590.88 L1268 608.88 L1218 608.88 Z" fill="#000"/>
<path d="M1213 599.88 L1218 591.88 L1267 591.88 L1267 607.88 L1218 607.88 Z" fill="#7d95bd"/>
<text x="1220" y="604.48" font-size="13" fill="#111" text-anchor="start" textLength="44" lengthAdjust="spacingAndGlyphs">53.2880</text>
<path d="M1212 616.97 L1218 607.97 L1268 607.97 L1268 625.97 L1218 625.97 Z" fill="#000"/>
<path d="M1213 616.97 L1218 608.97 L1267 608.97 L1267 624.97 L1218 624.97 Z" fill="#ffffff"/>
<text x="1220" y="621.57" font-size="13" fill="#111" text-anchor="start" textLength="44" lengthAdjust="spacingAndGlyphs">43.7139</text>
</svg></body></html>
